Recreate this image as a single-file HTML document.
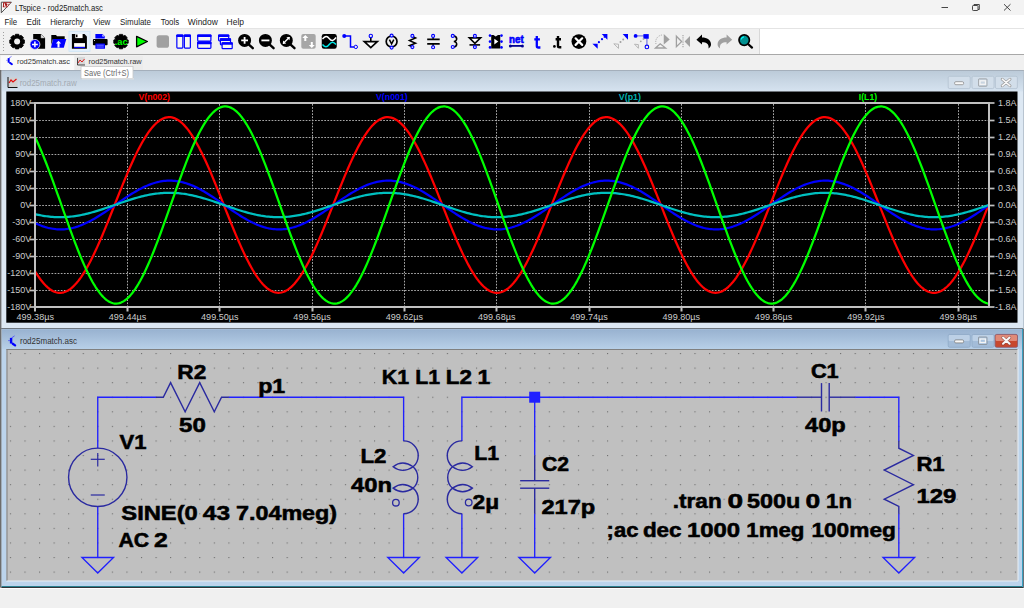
<!DOCTYPE html><html><head><meta charset="utf-8"><style>
html,body{margin:0;padding:0;background:#f0f0f0;width:1024px;height:608px;overflow:hidden}
svg{display:block}
</style></head><body>
<svg width="1024" height="608" viewBox="0 0 1024 608">
<defs>
<linearGradient id="gInact" x1="0" y1="0" x2="0" y2="1"><stop offset="0" stop-color="#bccbd9"/><stop offset="1" stop-color="#d6e3f0"/></linearGradient>
<linearGradient id="gAct" x1="0" y1="0" x2="0" y2="1"><stop offset="0" stop-color="#98b2d0"/><stop offset="1" stop-color="#b8d0e8"/></linearGradient>
<pattern id="grid" x="3.08" y="346.21" width="14.565" height="14.57" patternUnits="userSpaceOnUse"><rect x="6.9" y="6.9" width="1" height="1" fill="#585858"/></pattern>
</defs>

<rect x="0" y="0" width="1024" height="15" fill="#f3f3f3"/>
<rect x="0" y="15" width="1024" height="13.5" fill="#ffffff"/>
<rect x="0" y="28.5" width="1024" height="25.5" fill="#f0f0f0"/>
<rect x="760" y="28.5" width="264" height="25.5" fill="#ffffff"/>
<rect x="759" y="28.5" width="1" height="25.5" fill="#d8d8d8"/>
<rect x="0" y="28" width="1024" height="1" fill="#e4e4e4"/>
<rect x="0" y="54" width="1024" height="1" fill="#a8a8a8"/>
<rect x="0" y="55" width="1024" height="15" fill="#f0f0f0"/>
<rect x="0" y="587" width="1024" height="21" fill="#f0f0f0"/>
<rect x="0" y="587" width="1024" height="1" fill="#ffffff"/>
<path d="M1.3,2.2 L11.4,2.2 L1.3,12.8 Z" fill="#fafafa" stroke="#505050" stroke-width="1" stroke-linejoin="miter"/><path d="M3.2,2.3 L11,2.3 L9,4.5 L7.6,7.3 L2.8,7.3 Z" fill="#a81818"/><path d="M4.6,3.4 L4.4,6.2 L6.4,6.2 M6.6,3.4 L9.8,3.4 M8.2,3.4 L7.4,6.2" stroke="#fff" stroke-width="0.9" fill="none"/>
<text x="15" y="10.8" font-family="Liberation Sans" font-size="8.2" fill="#222" font-weight="normal" text-anchor="start" textLength="88" lengthAdjust="spacingAndGlyphs" >LTspice - rod25match.asc</text>
<rect x="941.5" y="7" width="6.5" height="0.9" fill="#333"/>
<rect x="972.5" y="5.5" width="5.5" height="5" fill="none" stroke="#333" stroke-width="0.9" rx="0.8"/><path d="M974,5.5 L974,4.5 L979.3,4.5 L979.3,9.5 L978,9.5" fill="none" stroke="#333" stroke-width="0.9"/>
<path d="M1004,4.2 L1010.5,10.5 M1010.5,4.2 L1004,10.5" stroke="#333" stroke-width="0.9"/>
<text x="4.6" y="25.1" font-family="Liberation Sans" font-size="8.4" fill="#222" font-weight="normal" text-anchor="start" textLength="12.6" lengthAdjust="spacingAndGlyphs" >File</text>
<text x="26.6" y="25.1" font-family="Liberation Sans" font-size="8.4" fill="#222" font-weight="normal" text-anchor="start" textLength="14" lengthAdjust="spacingAndGlyphs" >Edit</text>
<text x="50.2" y="25.1" font-family="Liberation Sans" font-size="8.4" fill="#222" font-weight="normal" text-anchor="start" textLength="33.6" lengthAdjust="spacingAndGlyphs" >Hierarchy</text>
<text x="93.2" y="25.1" font-family="Liberation Sans" font-size="8.4" fill="#222" font-weight="normal" text-anchor="start" textLength="17.2" lengthAdjust="spacingAndGlyphs" >View</text>
<text x="120" y="25.1" font-family="Liberation Sans" font-size="8.4" fill="#222" font-weight="normal" text-anchor="start" textLength="31" lengthAdjust="spacingAndGlyphs" >Simulate</text>
<text x="160.8" y="25.1" font-family="Liberation Sans" font-size="8.4" fill="#222" font-weight="normal" text-anchor="start" textLength="18.4" lengthAdjust="spacingAndGlyphs" >Tools</text>
<text x="187.8" y="25.1" font-family="Liberation Sans" font-size="8.4" fill="#222" font-weight="normal" text-anchor="start" textLength="30" lengthAdjust="spacingAndGlyphs" >Window</text>
<text x="226.6" y="25.1" font-family="Liberation Sans" font-size="8.4" fill="#222" font-weight="normal" text-anchor="start" textLength="17.4" lengthAdjust="spacingAndGlyphs" >Help</text>
<rect x="3" y="32" width="1" height="1" fill="#a0a0a0"/>
<rect x="3" y="35" width="1" height="1" fill="#a0a0a0"/>
<rect x="3" y="38" width="1" height="1" fill="#a0a0a0"/>
<rect x="3" y="41" width="1" height="1" fill="#a0a0a0"/>
<rect x="3" y="44" width="1" height="1" fill="#a0a0a0"/>
<rect x="3" y="47" width="1" height="1" fill="#a0a0a0"/>
<rect x="3" y="50" width="1" height="1" fill="#a0a0a0"/>
<rect x="69" y="31.3" width="21" height="20" fill="#e5f0fb" stroke="#cce4f7" stroke-width="0.8"/>
<path d="M24.42,39.96 L24.42,43.24 L22.49,43.88 L22.52,43.80 L23.43,45.62 L21.12,47.93 L19.30,47.02 L19.38,46.99 L18.74,48.92 L15.46,48.92 L14.82,46.99 L14.90,47.02 L13.08,47.93 L10.77,45.62 L11.68,43.80 L11.71,43.88 L9.78,43.24 L9.78,39.96 L11.71,39.32 L11.68,39.40 L10.77,37.58 L13.08,35.27 L14.90,36.18 L14.82,36.21 L15.46,34.28 L18.74,34.28 L19.38,36.21 L19.30,36.18 L21.12,35.27 L23.43,37.58 L22.52,39.40 L22.49,39.32 Z" fill="#000" stroke="#000" stroke-width="0.8" stroke-linejoin="round"/>
<circle cx="17.1" cy="41.6" r="3" fill="#f0f0f0"/>
<path d="M33.2,34 L41,34 L45.1,38 L45.1,48.75 L33.2,48.75 Z" fill="#000"/><path d="M41,34.3 L41,38 L44.8,38" fill="#e8e8e8" stroke="#999" stroke-width="0.5"/>
<circle cx="34.9" cy="44.4" r="5" fill="#0000ff" stroke="#f0f0f0" stroke-width="0.8"/><path d="M32,44.4 L37.8,44.4 M34.9,41.5 L34.9,47.3" stroke="#fff" stroke-width="1.5"/>
<path d="M51.3,36 L51.3,35 L56,35 L57,36.3 L64.7,36.3 L64.7,39 L52.9,39 L51.3,45 Z" fill="#000"/>
<path d="M53,39 L66.3,39 L63.8,47.8 L51,47.8 Z" fill="#0000ff"/><path d="M58.5,40.8 L61.2,43.6 L59.5,43.6 L59.5,47.5 L57.5,47.5 L57.5,43.6 L55.8,43.6 Z" fill="#fff"/>
<path d="M71.9,34 L84.5,34 L86.9,36.4 L86.9,48.75 L71.9,48.75 Z" fill="#000"/>
<rect x="75.3" y="34" width="7.3" height="4.1" fill="#fff"/><rect x="76" y="34.6" width="1.5" height="2.6" fill="#000"/>
<rect x="74.1" y="43.1" width="10.9" height="3.8" fill="#fff"/><rect x="74.1" y="46.9" width="10.9" height="1.2" fill="#0000ff"/>
<path d="M95.4,34 L102.5,34 L104.75,36.2 L104.75,38.6 L95.4,38.6 Z" fill="#0000ff"/><path d="M102.3,34.3 L102.3,36.4 L104.5,36.4 Z" fill="#e8e8ff"/>
<rect x="92.9" y="39" width="14.7" height="6.3" rx="1" fill="#000"/><rect x="94" y="40" width="0.9" height="0.9" fill="#fff"/>
<rect x="95.4" y="43.4" width="9.6" height="5.35" rx="0.6" fill="#0000ff"/><path d="M96.6,45.2 L103.8,45.2 M96.6,47 L103.8,47" stroke="#9090ff" stroke-width="0.8"/>
<path d="M128.22,39.99 L128.22,43.21 L126.32,43.85 L126.35,43.77 L127.25,45.56 L124.96,47.85 L123.17,46.95 L123.25,46.92 L122.61,48.82 L119.39,48.82 L118.75,46.92 L118.83,46.95 L117.04,47.85 L114.75,45.56 L115.65,43.77 L115.68,43.85 L113.78,43.21 L113.78,39.99 L115.68,39.35 L115.65,39.43 L114.75,37.64 L117.04,35.35 L118.83,36.25 L118.75,36.28 L119.39,34.38 L122.61,34.38 L123.25,36.28 L123.17,36.25 L124.96,35.35 L127.25,37.64 L126.35,39.43 L126.32,39.35 Z" fill="#000" stroke="#000" stroke-width="0.8" stroke-linejoin="round"/>
<text x="121.2" y="44.8" font-family="Liberation Sans" font-weight="bold" font-size="9.5" fill="#00ff00" text-anchor="middle" textLength="13" lengthAdjust="spacingAndGlyphs">.ac</text>
<path d="M136.6,36.3 L147.4,41.5 L136.6,46.8 Z" fill="#00ff00" stroke="#000" stroke-width="1.3" stroke-linejoin="round"/>
<rect x="156.6" y="35.3" width="12.4" height="12.5" rx="2.6" fill="#a0a0a0"/>
<rect x="176.85" y="35" width="6" height="13.1" rx="0.8" fill="#f8f8f0" stroke="#0000ff" stroke-width="1.2"/><rect x="176.25" y="34.4" width="7.2" height="2.6" rx="0.8" fill="#0000ff"/>
<rect x="184.35" y="35" width="6" height="13.1" rx="0.8" fill="#f8f8f0" stroke="#0000ff" stroke-width="1.2"/><rect x="183.75" y="34.4" width="7.2" height="2.6" rx="0.8" fill="#0000ff"/>
<rect x="197.7" y="35.0" width="13.2" height="6.1" rx="0.8" fill="#f8f8f0" stroke="#0000ff" stroke-width="1.2"/><rect x="197.1" y="34.4" width="14.4" height="2.7" rx="0.8" fill="#0000ff"/>
<rect x="197.7" y="42.2" width="13.2" height="6.1" rx="0.8" fill="#f8f8f0" stroke="#0000ff" stroke-width="1.2"/><rect x="197.1" y="41.6" width="14.4" height="2.7" rx="0.8" fill="#0000ff"/>
<rect x="218.6" y="35.0" width="10.1" height="5.9" rx="0.8" fill="#f8f8f0" stroke="#0000ff" stroke-width="1.2"/><rect x="218" y="34.4" width="11.3" height="2.6" rx="0.8" fill="#0000ff"/>
<rect x="220.4" y="38.9" width="10.1" height="5.9" rx="0.8" fill="#f8f8f0" stroke="#0000ff" stroke-width="1.2"/><rect x="219.8" y="38.3" width="11.3" height="2.6" rx="0.8" fill="#0000ff"/>
<rect x="222.1" y="42.800000000000004" width="10.1" height="5.9" rx="0.8" fill="#f8f8f0" stroke="#0000ff" stroke-width="1.2"/><rect x="221.5" y="42.2" width="11.3" height="2.6" rx="0.8" fill="#0000ff"/>
<path d="M248.10,43.90 L252.80,48.20" stroke="#000" stroke-width="2.4" stroke-linecap="round"/><circle cx="244.6" cy="40.4" r="5.7" fill="#000" stroke="#000" stroke-width="1.6"/>
<path d="M241.2,40.4 L248,40.4 M244.6,37 L244.6,43.8" stroke="#fff" stroke-width="1.8"/>
<path d="M268.90,43.90 L273.60,48.20" stroke="#000" stroke-width="2.4" stroke-linecap="round"/><circle cx="265.4" cy="40.4" r="5.7" fill="#000" stroke="#000" stroke-width="1.6"/>
<path d="M261.4,40.4 L269.4,40.4" stroke="#fff" stroke-width="1.8"/>
<path d="M289.80,43.90 L294.50,48.20" stroke="#000" stroke-width="2.4" stroke-linecap="round"/><circle cx="286.3" cy="40.4" r="5.7" fill="#000" stroke="#000" stroke-width="1.6"/>
<path d="M283.2,43.5 L289.4,37.3" stroke="#fff" stroke-width="1.3"/><path d="M289.8,36.9 L286.4,37.2 L289.5,40.3 Z M282.8,43.9 L283.1,40.5 L286.2,43.6 Z" fill="#fff"/>
<rect x="301.3" y="34" width="14.4" height="14.75" rx="2" fill="#a6a6a6"/>
<path d="M305.3,35 L308.3,38 L306.3,38 L306.3,41 L304.3,41 L304.3,38 L302.3,38 Z" fill="#fff"/><path d="M311.8,48 L314.8,45 L312.8,45 L312.8,42 L310.8,42 L310.8,45 L308.8,45 Z" fill="#fff"/>
<rect x="321.75" y="34" width="15" height="14.75" rx="2.2" fill="#000"/>
<path d="M322.5,39 C325,36 327,35.5 329.2,38.5 C331.5,41.5 333.5,41 336,37.5" stroke="#fff" stroke-width="1.4" fill="none"/>
<path d="M322.5,44.5 C325,47.5 327,47.5 329.2,44.5 C331.5,41.5 333.5,41.5 336,44.5" stroke="#00e8e8" stroke-width="1.4" fill="none"/>
<path d="M344.25,35.9 L350.5,35.9 L350.5,46.9 L354,46.9" stroke="#0000ff" stroke-width="1.5" fill="none"/><circle cx="344.25" cy="35.9" r="2" fill="#0000ff"/><circle cx="355.8" cy="46.9" r="1.7" fill="#f0f0f0" stroke="#0000ff" stroke-width="1"/>
<path d="M370.8,37.5 L370.8,41.6" stroke="#000" stroke-width="1.6"/><path d="M364.3,41.6 L377.3,41.6 L370.8,47.6 Z" fill="#fff" stroke="#000" stroke-width="1.7" stroke-linejoin="miter"/><circle cx="370.8" cy="35.9" r="1.7" fill="#f0f0f0" stroke="#0000ff" stroke-width="1.1"/>
<circle cx="391.6" cy="41.5" r="5.4" fill="none" stroke="#000" stroke-width="1.7"/><path d="M389.4,39.6 L391.6,43.8 L393.8,39.6" stroke="#000" stroke-width="1.5" fill="none"/>
<circle cx="391.6" cy="35.6" r="1.5" fill="#ddddff" stroke="#0000ff" stroke-width="1.1"/>
<circle cx="391.6" cy="47.6" r="1.5" fill="#ddddff" stroke="#0000ff" stroke-width="1.1"/>
<path d="M412.4,36.5 L415.6,38 L409.5,40.6 L415.6,43.2 L409.5,45.6 L412.4,46.8" stroke="#000" stroke-width="1.5" fill="none"/>
<circle cx="412.4" cy="35.9" r="1.5" fill="#ddddff" stroke="#0000ff" stroke-width="1.1"/>
<circle cx="412.4" cy="47.1" r="1.5" fill="#ddddff" stroke="#0000ff" stroke-width="1.1"/>
<path d="M433.1,36 L433.1,39.3 M433.1,43.9 L433.1,47" stroke="#000" stroke-width="1.4"/><path d="M427.2,39.3 L439.7,39.3 M427.2,43.9 L439.7,43.9" stroke="#000" stroke-width="1.7"/>
<circle cx="433.1" cy="35.9" r="1.5" fill="#ddddff" stroke="#0000ff" stroke-width="1.1"/>
<circle cx="433.1" cy="47.3" r="1.5" fill="#ddddff" stroke="#0000ff" stroke-width="1.1"/>
<path d="M452.8,35.9 C457.8,36 457.8,41.3 453.8,41.5 C457.8,41.7 457.8,47 452.8,47" stroke="#000" stroke-width="1.6" fill="none"/>
<circle cx="452.75" cy="35.9" r="1.5" fill="#ddddff" stroke="#0000ff" stroke-width="1.1"/>
<circle cx="452.75" cy="47" r="1.5" fill="#ddddff" stroke="#0000ff" stroke-width="1.1"/>
<path d="M469.3,37.9 L480.6,37.9 L474.9,43.4 Z" fill="#fff" stroke="#000" stroke-width="1.6" stroke-linejoin="miter"/><path d="M469.5,44.9 L480.1,44.9" stroke="#000" stroke-width="1.6"/>
<circle cx="474.9" cy="35.9" r="1.5" fill="#ddddff" stroke="#0000ff" stroke-width="1.1"/>
<circle cx="474.9" cy="47.1" r="1.5" fill="#ddddff" stroke="#0000ff" stroke-width="1.1"/>
<path d="M491.2,35 L493.5,35 L495.7,36.5 L498,35 L500.25,35 L500.25,48.4 L491.2,48.4 Z" fill="#000"/><path d="M494.3,38.8 L498.3,41.6 L494.3,44.4 Z" fill="#fff"/>
<circle cx="490" cy="35.6" r="1.3" fill="#0000ff"/><circle cx="501.5" cy="35.6" r="1.3" fill="#0000ff"/>
<circle cx="490" cy="41.6" r="1.3" fill="#0000ff"/><circle cx="501.5" cy="41.6" r="1.3" fill="#0000ff"/>
<circle cx="490" cy="47.4" r="1.3" fill="#0000ff"/><circle cx="501.5" cy="47.4" r="1.3" fill="#0000ff"/>
<text x="516.4" y="42.6" font-family="Liberation Sans" font-weight="bold" font-size="10" fill="#0000ff" stroke="#0000ff" stroke-width="0.6" text-anchor="middle" textLength="14.6" lengthAdjust="spacingAndGlyphs">net</text>
<path d="M510.4,45.9 L522.4,45.9" stroke="#000090" stroke-width="1.8"/><circle cx="510.4" cy="45.9" r="1.5" fill="#000090"/><circle cx="522.4" cy="45.9" r="1.5" fill="#000090"/>
<path d="M536.8,36 L536.8,46 Q536.8,47.5 538.3,47.5 L540.4,47.5 M534.3,39.3 L539.9,39.3" stroke="#0000ff" stroke-width="2.3" fill="none"/>
<circle cx="554.4" cy="46.4" r="1.35" fill="#000"/><path d="M558,36 L558,46 Q558,47.3 559.5,47.3 L561.3,47.3 M555.6,39.3 L561,39.3" stroke="#000" stroke-width="2.4" fill="none"/>
<circle cx="578.9" cy="41.6" r="7.4" fill="#000"/><path d="M575.6,38.3 L582.2,44.9 M582.2,38.3 L575.6,44.9" stroke="#fff" stroke-width="2.2" stroke-linecap="round"/>
<path d="M601.75,34.1 L607.4,34.1 L607.4,39.7 Z M592.4,43.7 L597.7,43.7 L597.7,48.75 Z" fill="#0000ff"/><circle cx="598.9" cy="42.2" r="1.1" fill="#0000ff"/><circle cx="602" cy="39.2" r="1.1" fill="#0000ff"/><circle cx="604.5" cy="36.9" r="0.9" fill="#0000ff"/>
<path d="M622.7,34.1 L628,34.1 L628,39.7 Z" fill="#0000ff"/><circle cx="620.5" cy="42" r="1" fill="#a0a0a0"/><circle cx="623.2" cy="39.4" r="1" fill="#a0a0a0"/><path d="M613.8,43.8 L618.5,44.2 L618.5,48.4 Z" fill="none" stroke="#a8a8a8" stroke-width="0.8"/>
<path d="M635.6,35.9 L644,35.9 M646.9,38.5 L646.9,45.3" stroke="#8080e0" stroke-width="1.3"/><rect x="643.4" y="34.1" width="5.35" height="4.65" fill="#0000ff"/><circle cx="635.6" cy="35.9" r="1.9" fill="#0000ff"/><circle cx="646.9" cy="46.9" r="1.8" fill="#f0f0f0" stroke="#0000ff" stroke-width="1.1"/>
<circle cx="640.8" cy="41.3" r="0.9" fill="#a0a0a0"/><circle cx="643.5" cy="38.9" r="0.9" fill="#a0a0a0"/><path d="M634.5,44.2 L638.4,44.6 L638.4,48.3 Z" fill="none" stroke="#a8a8a8" stroke-width="0.8"/>
<path d="M663.75,34.1 L669.7,39.4 L663.75,44.4 Z" fill="#a0a0a0"/><path d="M655.5,48 L660.2,43.8 L665.6,48 Z" fill="none" stroke="#a0a0a0" stroke-width="1.3"/>
<path d="M656,44 A7,7 0 0 1 663,35" stroke="#a0a0a0" stroke-width="1" stroke-dasharray="1 1.2" fill="none"/>
<path d="M676.4,36.2 L681.6,41.6 L676.4,46.7 Z" fill="none" stroke="#a0a0a0" stroke-width="1.3"/><path d="M690,35.9 L684.6,41.6 L690,47 Z" fill="#a0a0a0"/><path d="M683,35 L683,48" stroke="#a0a0a0" stroke-width="1.1" stroke-dasharray="1.2 1"/>
<path d="M696.4,39.7 L702,34.6 L702,37.4 C707,37.4 711,40 711,44.3 C711,46 710.3,47.4 708.5,48.5 C709.3,44 706.5,42.2 702,42.2 L702,44.6 Z" fill="#000"/>
<path d="M732.2,39.7 L726.6,34.6 L726.6,37.4 C721.6,37.4 717.6,40 717.6,44.3 C717.6,46 718.3,47.4 720.1,48.5 C719.3,44 722.1,42.2 726.6,42.2 L726.6,44.6 Z" fill="#a0a0a0"/>
<path d="M747.5,43.5 L752,47.6" stroke="#000" stroke-width="2.3" stroke-linecap="round"/><circle cx="744.2" cy="40.1" r="5.2" fill="#009090" stroke="#000" stroke-width="1.7"/><path d="M741.2,39.3 A3.2,3.2 0 0 1 744,36.8" stroke="#00ffff" stroke-width="1.3" fill="none"/>
<rect x="1" y="55.5" width="73" height="14.5" fill="#fafafa"/>
<rect x="75" y="56" width="68" height="14" fill="#ececec"/>
<path d="M11.53,56.40 L8.91,58.29" stroke="#4040ff" stroke-width="0.82" opacity="0.8"/><rect x="7.68" y="58.12" width="1.97" height="4.59" fill="#0000ff"/><path d="M6.20,60.34 L7.76,60.34" stroke="#4040ff" stroke-width="0.82" opacity="0.7"/><path d="M9.97,62.88 L11.94,64.27" stroke="#0000ff" stroke-width="1.89" stroke-linecap="round"/>
<text x="17" y="64" font-family="Liberation Sans" font-size="7.6" fill="#333" font-weight="normal" text-anchor="start" textLength="53" lengthAdjust="spacingAndGlyphs" >rod25match.asc</text>
<rect x="77" y="57" width="8" height="8" fill="#d8d8d8"/><path d="M78,63 L80,60 L82,62 L84.5,59" stroke="#e02020" stroke-width="1" fill="none"/><path d="M77.5,58 L77.5,65 L85,65" stroke="#222" stroke-width="0.8" fill="none"/>
<text x="88.6" y="64.3" font-family="Liberation Sans" font-size="7.6" fill="#333" font-weight="normal" text-anchor="start" textLength="53" lengthAdjust="spacingAndGlyphs" >rod25match.raw</text>
<rect x="0" y="70" width="1024" height="518" fill="#a0a0a0"/>
<rect x="0" y="70" width="1.5" height="517" fill="#6d6d6d"/>
<rect x="1.5" y="70.5" width="1021.5" height="257.5" fill="#dde8f3"/>
<rect x="1.5" y="70.5" width="1021.5" height="1" fill="#8a9aab"/>
<rect x="2" y="71" width="1021" height="20.5" fill="url(#gInact)"/>
<rect x="1023" y="70.5" width="1" height="258" fill="#b8c4d0"/>
<rect x="8" y="77.5" width="9.5" height="9.5" fill="#d0d0d0"/><path d="M9,83 L11,80 L13,82 L16.5,79" stroke="#e01010" stroke-width="1.2" fill="none"/><path d="M8,77 L8,87.5 L17.5,87.5" stroke="#111" stroke-width="1" fill="none"/>
<text x="19.7" y="85.5" font-family="Liberation Sans" font-size="8.4" fill="#a3abb3" font-weight="normal" text-anchor="start" textLength="57" lengthAdjust="spacingAndGlyphs" >rod25match.raw</text>
<rect x="948.2" y="76.3" width="22" height="12.3" rx="1.5" fill="#d2deea" stroke="#b3c2d1" stroke-width="0.8"/>
<rect x="972" y="76.3" width="22" height="12.3" rx="1.5" fill="#d2deea" stroke="#b3c2d1" stroke-width="0.8"/>
<rect x="995.4" y="76.3" width="22" height="12.3" rx="1.5" fill="#d2deea" stroke="#b3c2d1" stroke-width="0.8"/>
<rect x="954.6" y="81.7" width="9" height="3" rx="1.2" fill="#f8f8f8" stroke="#7f7f7f" stroke-width="0.7"/>
<rect x="978.5" y="78.8" width="8.5" height="7.5" rx="0.8" fill="#c8d4e0" stroke="#8b8b8b" stroke-width="0.6"/><rect x="980" y="80.8" width="5.5" height="3.5" fill="none" stroke="#f4f4f4" stroke-width="1.3"/>
<path d="M1002.2,79.2 L1010,85.8 M1010,79.2 L1002.2,85.8" stroke="#8b8b8b" stroke-width="2.8" stroke-linecap="round"/><path d="M1002.2,79.2 L1010,85.8 M1010,79.2 L1002.2,85.8" stroke="#f8f8f8" stroke-width="1.6" stroke-linecap="round"/>
<rect x="6.3" y="91.5" width="1011.2" height="231.2" fill="#000"/>
<g stroke="#a8a8a8" stroke-width="1" stroke-dasharray="1.7 1.4">
<line x1="36" y1="120.5" x2="988" y2="120.5"/>
<line x1="36" y1="137.5" x2="988" y2="137.5"/>
<line x1="36" y1="154.5" x2="988" y2="154.5"/>
<line x1="36" y1="171.5" x2="988" y2="171.5"/>
<line x1="36" y1="188.5" x2="988" y2="188.5"/>
<line x1="36" y1="205.5" x2="988" y2="205.5"/>
<line x1="36" y1="222.5" x2="988" y2="222.5"/>
<line x1="36" y1="239.5" x2="988" y2="239.5"/>
<line x1="36" y1="256.5" x2="988" y2="256.5"/>
<line x1="36" y1="273.5" x2="988" y2="273.5"/>
<line x1="36" y1="290.5" x2="988" y2="290.5"/>
<line x1="127.5" y1="104" x2="127.5" y2="306"/>
<line x1="219.5" y1="104" x2="219.5" y2="306"/>
<line x1="312.5" y1="104" x2="312.5" y2="306"/>
<line x1="404.5" y1="104" x2="404.5" y2="306"/>
<line x1="496.5" y1="104" x2="496.5" y2="306"/>
<line x1="589.5" y1="104" x2="589.5" y2="306"/>
<line x1="681.5" y1="104" x2="681.5" y2="306"/>
<line x1="773.5" y1="104" x2="773.5" y2="306"/>
<line x1="865.5" y1="104" x2="865.5" y2="306"/>
<line x1="958.5" y1="104" x2="958.5" y2="306"/>
</g>
<defs><clipPath id="pc"><rect x="35.2" y="93.0" width="953.5999999999999" height="224.0"/></clipPath></defs>
<g clip-path="url(#pc)" fill="none" stroke-width="2.25" stroke-linejoin="round">
<path d="M35.20,271.51 L36.79,274.06 L38.38,276.47 L39.97,278.73 L41.56,280.83 L43.15,282.78 L44.74,284.56 L46.33,286.18 L47.91,287.63 L49.50,288.90 L51.09,290.00 L52.68,290.92 L54.27,291.67 L55.86,292.23 L57.45,292.61 L59.04,292.80 L60.63,292.82 L62.22,292.65 L63.81,292.29 L65.40,291.76 L66.99,291.04 L68.58,290.15 L70.17,289.07 L71.75,287.82 L73.34,286.40 L74.93,284.81 L76.52,283.05 L78.11,281.12 L79.70,279.04 L81.29,276.81 L82.88,274.42 L84.47,271.89 L86.06,269.22 L87.65,266.42 L89.24,263.48 L90.83,260.43 L92.42,257.26 L94.01,253.98 L95.59,250.59 L97.18,247.12 L98.77,243.55 L100.36,239.91 L101.95,236.19 L103.54,232.40 L105.13,228.56 L106.72,224.67 L108.31,220.74 L109.90,216.78 L111.49,212.79 L113.08,208.78 L114.67,204.77 L116.26,200.76 L117.85,196.75 L119.43,192.77 L121.02,188.80 L122.61,184.88 L124.20,180.99 L125.79,177.16 L127.38,173.38 L128.97,169.67 L130.56,166.03 L132.15,162.48 L133.74,159.01 L135.33,155.64 L136.92,152.37 L138.51,149.21 L140.10,146.17 L141.69,143.25 L143.27,140.47 L144.86,137.81 L146.45,135.30 L148.04,132.93 L149.63,130.71 L151.22,128.65 L152.81,126.74 L154.40,125.00 L155.99,123.43 L157.58,122.03 L159.17,120.80 L160.76,119.74 L162.35,118.87 L163.94,118.17 L165.53,117.66 L167.11,117.32 L168.70,117.18 L170.29,117.21 L171.88,117.43 L173.47,117.83 L175.06,118.41 L176.65,119.17 L178.24,120.12 L179.83,121.24 L181.42,122.53 L183.01,124.00 L184.60,125.64 L186.19,127.44 L187.78,129.40 L189.37,131.52 L190.95,133.80 L192.54,136.22 L194.13,138.79 L195.72,141.50 L197.31,144.34 L198.90,147.30 L200.49,150.39 L202.08,153.59 L203.67,156.89 L205.26,160.30 L206.85,163.80 L208.44,167.39 L210.03,171.06 L211.62,174.79 L213.21,178.59 L214.79,182.45 L216.38,186.35 L217.97,190.29 L219.56,194.26 L221.15,198.26 L222.74,202.26 L224.33,206.28 L225.92,210.29 L227.51,214.29 L229.10,218.27 L230.69,222.22 L232.28,226.14 L233.87,230.01 L235.46,233.83 L237.05,237.59 L238.63,241.28 L240.22,244.90 L241.81,248.43 L243.40,251.88 L244.99,255.22 L246.58,258.46 L248.17,261.59 L249.76,264.60 L251.35,267.48 L252.94,270.24 L254.53,272.86 L256.12,275.34 L257.71,277.67 L259.30,279.84 L260.89,281.87 L262.47,283.73 L264.06,285.42 L265.65,286.95 L267.24,288.31 L268.83,289.50 L270.42,290.50 L272.01,291.33 L273.60,291.98 L275.19,292.45 L276.78,292.73 L278.37,292.83 L279.96,292.75 L281.55,292.49 L283.14,292.04 L284.73,291.41 L286.31,290.60 L287.90,289.61 L289.49,288.44 L291.08,287.10 L292.67,285.59 L294.26,283.91 L295.85,282.07 L297.44,280.06 L299.03,277.90 L300.62,275.58 L302.21,273.12 L303.80,270.52 L305.39,267.78 L306.98,264.90 L308.57,261.91 L310.15,258.79 L311.74,255.56 L313.33,252.23 L314.92,248.79 L316.51,245.27 L318.10,241.66 L319.69,237.98 L321.28,234.22 L322.87,230.41 L324.46,226.54 L326.05,222.63 L327.64,218.68 L329.23,214.70 L330.82,210.70 L332.41,206.69 L333.99,202.68 L335.58,198.67 L337.17,194.67 L338.76,190.70 L340.35,186.75 L341.94,182.85 L343.53,178.99 L345.12,175.18 L346.71,171.44 L348.30,167.77 L349.89,164.17 L351.48,160.66 L353.07,157.24 L354.66,153.92 L356.25,150.71 L357.83,147.61 L359.42,144.64 L361.01,141.78 L362.60,139.06 L364.19,136.48 L365.78,134.04 L367.37,131.75 L368.96,129.61 L370.55,127.63 L372.14,125.81 L373.73,124.16 L375.32,122.68 L376.91,121.36 L378.50,120.23 L380.09,119.26 L381.67,118.48 L383.26,117.88 L384.85,117.46 L386.44,117.22 L388.03,117.17 L389.62,117.30 L391.21,117.61 L392.80,118.11 L394.39,118.79 L395.98,119.64 L397.57,120.68 L399.16,121.89 L400.75,123.28 L402.34,124.83 L403.93,126.55 L405.51,128.44 L407.10,130.49 L408.69,132.69 L410.28,135.04 L411.87,137.54 L413.46,140.18 L415.05,142.96 L416.64,145.87 L418.23,148.89 L419.82,152.04 L421.41,155.30 L423.00,158.66 L424.59,162.12 L426.18,165.66 L427.77,169.29 L429.35,172.99 L430.94,176.77 L432.53,180.59 L434.12,184.47 L435.71,188.40 L437.30,192.36 L438.89,196.34 L440.48,200.34 L442.07,204.35 L443.66,208.37 L445.25,212.37 L446.84,216.37 L448.43,220.33 L450.02,224.27 L451.61,228.16 L453.19,232.01 L454.78,235.80 L456.37,239.53 L457.96,243.18 L459.55,246.75 L461.14,250.24 L462.73,253.63 L464.32,256.92 L465.91,260.11 L467.50,263.17 L469.09,266.12 L470.68,268.94 L472.27,271.62 L473.86,274.17 L475.45,276.57 L477.03,278.82 L478.62,280.92 L480.21,282.86 L481.80,284.63 L483.39,286.24 L484.98,287.68 L486.57,288.95 L488.16,290.04 L489.75,290.96 L491.34,291.69 L492.93,292.25 L494.52,292.62 L496.11,292.81 L497.70,292.81 L499.29,292.64 L500.87,292.27 L502.46,291.73 L504.05,291.01 L505.64,290.10 L507.23,289.02 L508.82,287.77 L510.41,286.34 L512.00,284.74 L513.59,282.97 L515.18,281.04 L516.77,278.95 L518.36,276.71 L519.95,274.32 L521.54,271.78 L523.13,269.10 L524.71,266.29 L526.30,263.36 L527.89,260.30 L529.48,257.12 L531.07,253.84 L532.66,250.45 L534.25,246.97 L535.84,243.40 L537.43,239.75 L539.02,236.03 L540.61,232.24 L542.20,228.40 L543.79,224.51 L545.38,220.57 L546.97,216.61 L548.55,212.62 L550.14,208.61 L551.73,204.60 L553.32,200.59 L554.91,196.58 L556.50,192.60 L558.09,188.64 L559.68,184.71 L561.27,180.83 L562.86,177.00 L564.45,173.22 L566.04,169.52 L567.63,165.88 L569.22,162.33 L570.81,158.87 L572.39,155.50 L573.98,152.24 L575.57,149.08 L577.16,146.05 L578.75,143.13 L580.34,140.35 L581.93,137.70 L583.52,135.19 L585.11,132.83 L586.70,130.62 L588.29,128.56 L589.88,126.67 L591.47,124.93 L593.06,123.37 L594.65,121.97 L596.23,120.75 L597.82,119.70 L599.41,118.83 L601.00,118.15 L602.59,117.64 L604.18,117.31 L605.77,117.17 L607.36,117.22 L608.95,117.44 L610.54,117.85 L612.13,118.44 L613.72,119.21 L615.31,120.16 L616.90,121.29 L618.49,122.59 L620.07,124.07 L621.66,125.71 L623.25,127.52 L624.84,129.49 L626.43,131.62 L628.02,133.90 L629.61,136.33 L631.20,138.90 L632.79,141.61 L634.38,144.46 L635.97,147.43 L637.56,150.52 L639.15,153.72 L640.74,157.04 L642.33,160.45 L643.91,163.95 L645.50,167.54 L647.09,171.21 L648.68,174.95 L650.27,178.75 L651.86,182.61 L653.45,186.51 L655.04,190.46 L656.63,194.43 L658.22,198.42 L659.81,202.43 L661.40,206.45 L662.99,210.46 L664.58,214.46 L666.17,218.44 L667.75,222.39 L669.34,226.30 L670.93,230.17 L672.52,233.99 L674.11,237.75 L675.70,241.44 L677.29,245.05 L678.88,248.58 L680.47,252.02 L682.06,255.36 L683.65,258.59 L685.24,261.72 L686.83,264.72 L688.42,267.60 L690.01,270.35 L691.59,272.97 L693.18,275.44 L694.77,277.76 L696.36,279.93 L697.95,281.95 L699.54,283.80 L701.13,285.49 L702.72,287.01 L704.31,288.36 L705.90,289.54 L707.49,290.54 L709.08,291.36 L710.67,292.00 L712.26,292.46 L713.85,292.74 L715.43,292.83 L717.02,292.74 L718.61,292.47 L720.20,292.01 L721.79,291.38 L723.38,290.56 L724.97,289.56 L726.56,288.39 L728.15,287.04 L729.74,285.52 L731.33,283.84 L732.92,281.98 L734.51,279.97 L736.10,277.80 L737.69,275.48 L739.27,273.01 L740.86,270.40 L742.45,267.66 L744.04,264.78 L745.63,261.78 L747.22,258.66 L748.81,255.42 L750.40,252.08 L751.99,248.65 L753.58,245.12 L755.17,241.51 L756.76,237.82 L758.35,234.06 L759.94,230.25 L761.53,226.38 L763.11,222.46 L764.70,218.51 L766.29,214.53 L767.88,210.53 L769.47,206.52 L771.06,202.51 L772.65,198.50 L774.24,194.51 L775.83,190.53 L777.42,186.59 L779.01,182.68 L780.60,178.83 L782.19,175.02 L783.78,171.28 L785.37,167.61 L786.95,164.02 L788.54,160.51 L790.13,157.10 L791.72,153.79 L793.31,150.58 L794.90,147.49 L796.49,144.51 L798.08,141.67 L799.67,138.95 L801.26,136.38 L802.85,133.94 L804.44,131.66 L806.03,129.53 L807.62,127.55 L809.21,125.74 L810.79,124.10 L812.38,122.62 L813.97,121.31 L815.56,120.18 L817.15,119.23 L818.74,118.45 L820.33,117.86 L821.92,117.45 L823.51,117.22 L825.10,117.17 L826.69,117.31 L828.28,117.63 L829.87,118.13 L831.46,118.82 L833.05,119.68 L834.63,120.73 L836.22,121.95 L837.81,123.34 L839.40,124.90 L840.99,126.63 L842.58,128.52 L844.17,130.58 L845.76,132.79 L847.35,135.15 L848.94,137.65 L850.53,140.30 L852.12,143.08 L853.71,145.99 L855.30,149.02 L856.89,152.18 L858.47,155.44 L860.06,158.80 L861.65,162.26 L863.24,165.81 L864.83,169.45 L866.42,173.15 L868.01,176.92 L869.60,180.76 L871.19,184.64 L872.78,188.56 L874.37,192.52 L875.96,196.51 L877.55,200.51 L879.14,204.52 L880.73,208.54 L882.31,212.54 L883.90,216.53 L885.49,220.50 L887.08,224.43 L888.67,228.32 L890.26,232.17 L891.85,235.96 L893.44,239.68 L895.03,243.33 L896.62,246.90 L898.21,250.38 L899.80,253.77 L901.39,257.06 L902.98,260.24 L904.57,263.30 L906.15,266.24 L907.74,269.05 L909.33,271.73 L910.92,274.27 L912.51,276.67 L914.10,278.91 L915.69,281.00 L917.28,282.93 L918.87,284.70 L920.46,286.31 L922.05,287.74 L923.64,289.00 L925.23,290.08 L926.82,290.99 L928.41,291.72 L929.99,292.27 L931.58,292.63 L933.17,292.81 L934.76,292.81 L936.35,292.62 L937.94,292.26 L939.53,291.70 L941.12,290.97 L942.71,290.06 L944.30,288.97 L945.89,287.71 L947.48,286.27 L949.07,284.66 L950.66,282.89 L952.25,280.96 L953.83,278.86 L955.42,276.61 L957.01,274.21 L958.60,271.67 L960.19,268.99 L961.78,266.17 L963.37,263.23 L964.96,260.17 L966.55,256.99 L968.14,253.70 L969.73,250.31 L971.32,246.82 L972.91,243.25 L974.50,239.60 L976.09,235.87 L977.67,232.08 L979.26,228.24 L980.85,224.34 L982.44,220.41 L984.03,216.44 L985.62,212.45 L987.21,208.45 L988.80,204.43" stroke="#ff0000"/>
<path d="M35.20,223.17 L36.79,223.90 L38.38,224.58 L39.97,225.22 L41.56,225.82 L43.15,226.38 L44.74,226.89 L46.33,227.36 L47.91,227.78 L49.50,228.15 L51.09,228.47 L52.68,228.75 L54.27,228.97 L55.86,229.15 L57.45,229.27 L59.04,229.34 L60.63,229.37 L62.22,229.34 L63.81,229.26 L65.40,229.13 L66.99,228.95 L68.58,228.72 L70.17,228.44 L71.75,228.11 L73.34,227.74 L74.93,227.31 L76.52,226.84 L78.11,226.32 L79.70,225.76 L81.29,225.16 L82.88,224.51 L84.47,223.83 L86.06,223.10 L87.65,222.34 L89.24,221.54 L90.83,220.70 L92.42,219.83 L94.01,218.93 L95.59,218.01 L97.18,217.05 L98.77,216.07 L100.36,215.07 L101.95,214.04 L103.54,213.00 L105.13,211.94 L106.72,210.87 L108.31,209.78 L109.90,208.68 L111.49,207.58 L113.08,206.47 L114.67,205.36 L116.26,204.24 L117.85,203.13 L119.43,202.02 L121.02,200.92 L122.61,199.83 L124.20,198.75 L125.79,197.68 L127.38,196.62 L128.97,195.59 L130.56,194.57 L132.15,193.57 L133.74,192.60 L135.33,191.66 L136.92,190.74 L138.51,189.85 L140.10,188.99 L141.69,188.17 L143.27,187.38 L144.86,186.63 L146.45,185.92 L148.04,185.25 L149.63,184.62 L151.22,184.03 L152.81,183.48 L154.40,182.98 L155.99,182.53 L157.58,182.12 L159.17,181.76 L160.76,181.45 L162.35,181.19 L163.94,180.98 L165.53,180.82 L167.11,180.71 L168.70,180.65 L170.29,180.64 L171.88,180.68 L173.47,180.77 L175.06,180.91 L176.65,181.10 L178.24,181.35 L179.83,181.64 L181.42,181.98 L183.01,182.37 L184.60,182.81 L186.19,183.29 L187.78,183.82 L189.37,184.39 L190.95,185.00 L192.54,185.66 L194.13,186.36 L195.72,187.10 L197.31,187.87 L198.90,188.68 L200.49,189.52 L202.08,190.40 L203.67,191.30 L205.26,192.24 L206.85,193.20 L208.44,194.19 L210.03,195.20 L211.62,196.23 L213.21,197.27 L214.79,198.34 L216.38,199.42 L217.97,200.51 L219.56,201.60 L221.15,202.71 L222.74,203.82 L224.33,204.93 L225.92,206.05 L227.51,207.16 L229.10,208.26 L230.69,209.36 L232.28,210.46 L233.87,211.53 L235.46,212.60 L237.05,213.65 L238.63,214.68 L240.22,215.69 L241.81,216.68 L243.40,217.65 L244.99,218.59 L246.58,219.50 L248.17,220.38 L249.76,221.22 L251.35,222.04 L252.94,222.81 L254.53,223.56 L256.12,224.26 L257.71,224.92 L259.30,225.54 L260.89,226.12 L262.47,226.65 L264.06,227.14 L265.65,227.58 L267.24,227.98 L268.83,228.32 L270.42,228.62 L272.01,228.87 L273.60,229.07 L275.19,229.22 L276.78,229.31 L278.37,229.36 L279.96,229.36 L281.55,229.30 L283.14,229.20 L284.73,229.04 L286.31,228.84 L287.90,228.58 L289.49,228.28 L291.08,227.92 L292.67,227.52 L294.26,227.07 L295.85,226.58 L297.44,226.04 L299.03,225.45 L300.62,224.83 L302.21,224.16 L303.80,223.45 L305.39,222.71 L306.98,221.92 L308.57,221.10 L310.15,220.25 L311.74,219.37 L313.33,218.45 L314.92,217.51 L316.51,216.54 L318.10,215.55 L319.69,214.54 L321.28,213.50 L322.87,212.45 L324.46,211.38 L326.05,210.30 L327.64,209.21 L329.23,208.11 L330.82,207.00 L332.41,205.89 L333.99,204.78 L335.58,203.66 L337.17,202.55 L338.76,201.45 L340.35,200.35 L341.94,199.26 L343.53,198.19 L345.12,197.12 L346.71,196.08 L348.30,195.05 L349.89,194.05 L351.48,193.06 L353.07,192.11 L354.66,191.17 L356.25,190.27 L357.83,189.40 L359.42,188.56 L361.01,187.76 L362.60,186.99 L364.19,186.26 L365.78,185.57 L367.37,184.91 L368.96,184.31 L370.55,183.74 L372.14,183.22 L373.73,182.74 L375.32,182.31 L376.91,181.93 L378.50,181.60 L380.09,181.31 L381.67,181.07 L383.26,180.89 L384.85,180.75 L386.44,180.67 L388.03,180.63 L389.62,180.65 L391.21,180.72 L392.80,180.84 L394.39,181.01 L395.98,181.22 L397.57,181.49 L399.16,181.81 L400.75,182.18 L402.34,182.59 L403.93,183.05 L405.51,183.56 L407.10,184.11 L408.69,184.70 L410.28,185.34 L411.87,186.02 L413.46,186.74 L415.05,187.49 L416.64,188.29 L418.23,189.11 L419.82,189.97 L421.41,190.87 L423.00,191.79 L424.59,192.74 L426.18,193.71 L427.77,194.71 L429.35,195.73 L430.94,196.77 L432.53,197.83 L434.12,198.90 L435.71,199.98 L437.30,201.08 L438.89,202.18 L440.48,203.29 L442.07,204.40 L443.66,205.51 L445.25,206.63 L446.84,207.74 L448.43,208.84 L450.02,209.93 L451.61,211.02 L453.19,212.09 L454.78,213.15 L456.37,214.19 L457.96,215.21 L459.55,216.21 L461.14,217.19 L462.73,218.14 L464.32,219.06 L465.91,219.96 L467.50,220.82 L469.09,221.65 L470.68,222.45 L472.27,223.21 L473.86,223.93 L475.45,224.61 L477.03,225.25 L478.62,225.85 L480.21,226.40 L481.80,226.91 L483.39,227.37 L484.98,227.79 L486.57,228.16 L488.16,228.48 L489.75,228.76 L491.34,228.98 L492.93,229.15 L494.52,229.27 L496.11,229.35 L497.70,229.37 L499.29,229.34 L500.87,229.26 L502.46,229.12 L504.05,228.94 L505.64,228.71 L507.23,228.43 L508.82,228.10 L510.41,227.72 L512.00,227.29 L513.59,226.82 L515.18,226.30 L516.77,225.74 L518.36,225.13 L519.95,224.49 L521.54,223.80 L523.13,223.07 L524.71,222.30 L526.30,221.50 L527.89,220.66 L529.48,219.80 L531.07,218.90 L532.66,217.97 L534.25,217.01 L535.84,216.03 L537.43,215.03 L539.02,214.00 L540.61,212.96 L542.20,211.90 L543.79,210.82 L545.38,209.73 L546.97,208.64 L548.55,207.53 L550.14,206.42 L551.73,205.31 L553.32,204.20 L554.91,203.08 L556.50,201.98 L558.09,200.87 L559.68,199.78 L561.27,198.70 L562.86,197.63 L564.45,196.58 L566.04,195.54 L567.63,194.53 L569.22,193.53 L570.81,192.56 L572.39,191.62 L573.98,190.70 L575.57,189.81 L577.16,188.96 L578.75,188.14 L580.34,187.35 L581.93,186.60 L583.52,185.89 L585.11,185.22 L586.70,184.59 L588.29,184.01 L589.88,183.46 L591.47,182.96 L593.06,182.51 L594.65,182.11 L596.23,181.75 L597.82,181.44 L599.41,181.18 L601.00,180.97 L602.59,180.81 L604.18,180.70 L605.77,180.64 L607.36,180.64 L608.95,180.68 L610.54,180.77 L612.13,180.92 L613.72,181.11 L615.31,181.36 L616.90,181.65 L618.49,182.00 L620.07,182.39 L621.66,182.83 L623.25,183.31 L624.84,183.84 L626.43,184.41 L628.02,185.03 L629.61,185.69 L631.20,186.39 L632.79,187.13 L634.38,187.90 L635.97,188.71 L637.56,189.56 L639.15,190.44 L640.74,191.34 L642.33,192.28 L643.91,193.24 L645.50,194.23 L647.09,195.24 L648.68,196.27 L650.27,197.32 L651.86,198.38 L653.45,199.46 L655.04,200.55 L656.63,201.65 L658.22,202.76 L659.81,203.87 L661.40,204.98 L662.99,206.09 L664.58,207.20 L666.17,208.31 L667.75,209.41 L669.34,210.50 L670.93,211.58 L672.52,212.64 L674.11,213.69 L675.70,214.72 L677.29,215.74 L678.88,216.72 L680.47,217.69 L682.06,218.62 L683.65,219.53 L685.24,220.41 L686.83,221.26 L688.42,222.07 L690.01,222.85 L691.59,223.59 L693.18,224.29 L694.77,224.95 L696.36,225.57 L697.95,226.14 L699.54,226.67 L701.13,227.16 L702.72,227.60 L704.31,227.99 L705.90,228.34 L707.49,228.63 L709.08,228.88 L710.67,229.08 L712.26,229.22 L713.85,229.32 L715.43,229.36 L717.02,229.36 L718.61,229.30 L720.20,229.19 L721.79,229.04 L723.38,228.83 L724.97,228.57 L726.56,228.26 L728.15,227.91 L729.74,227.50 L731.33,227.05 L732.92,226.56 L734.51,226.01 L736.10,225.43 L737.69,224.80 L739.27,224.13 L740.86,223.42 L742.45,222.67 L744.04,221.89 L745.63,221.07 L747.22,220.22 L748.81,219.33 L750.40,218.42 L751.99,217.47 L753.58,216.50 L755.17,215.51 L756.76,214.49 L758.35,213.46 L759.94,212.41 L761.53,211.34 L763.11,210.26 L764.70,209.16 L766.29,208.06 L767.88,206.95 L769.47,205.84 L771.06,204.73 L772.65,203.62 L774.24,202.51 L775.83,201.40 L777.42,200.30 L779.01,199.22 L780.60,198.14 L782.19,197.08 L783.78,196.04 L785.37,195.01 L786.95,194.01 L788.54,193.02 L790.13,192.07 L791.72,191.14 L793.31,190.24 L794.90,189.37 L796.49,188.53 L798.08,187.72 L799.67,186.96 L801.26,186.23 L802.85,185.54 L804.44,184.89 L806.03,184.28 L807.62,183.72 L809.21,183.20 L810.79,182.72 L812.38,182.29 L813.97,181.91 L815.56,181.58 L817.15,181.30 L818.74,181.07 L820.33,180.88 L821.92,180.75 L823.51,180.67 L825.10,180.63 L826.69,180.65 L828.28,180.72 L829.87,180.84 L831.46,181.01 L833.05,181.24 L834.63,181.51 L836.22,181.83 L837.81,182.19 L839.40,182.61 L840.99,183.07 L842.58,183.58 L844.17,184.13 L845.76,184.73 L847.35,185.37 L848.94,186.05 L850.53,186.77 L852.12,187.53 L853.71,188.32 L855.30,189.15 L856.89,190.01 L858.47,190.91 L860.06,191.83 L861.65,192.78 L863.24,193.75 L864.83,194.75 L866.42,195.77 L868.01,196.81 L869.60,197.87 L871.19,198.94 L872.78,200.03 L874.37,201.12 L875.96,202.23 L877.55,203.33 L879.14,204.45 L880.73,205.56 L882.31,206.67 L883.90,207.78 L885.49,208.89 L887.08,209.98 L888.67,211.06 L890.26,212.14 L891.85,213.19 L893.44,214.23 L895.03,215.25 L896.62,216.25 L898.21,217.23 L899.80,218.18 L901.39,219.10 L902.98,219.99 L904.57,220.86 L906.15,221.69 L907.74,222.48 L909.33,223.24 L910.92,223.96 L912.51,224.64 L914.10,225.27 L915.69,225.87 L917.28,226.42 L918.87,226.93 L920.46,227.39 L922.05,227.81 L923.64,228.18 L925.23,228.50 L926.82,228.77 L928.41,228.99 L929.99,229.16 L931.58,229.28 L933.17,229.35 L934.76,229.37 L936.35,229.33 L937.94,229.25 L939.53,229.12 L941.12,228.93 L942.71,228.70 L944.30,228.42 L945.89,228.08 L947.48,227.70 L949.07,227.27 L950.66,226.80 L952.25,226.28 L953.83,225.72 L955.42,225.11 L957.01,224.46 L958.60,223.77 L960.19,223.04 L961.78,222.27 L963.37,221.47 L964.96,220.63 L966.55,219.76 L968.14,218.86 L969.73,217.93 L971.32,216.97 L972.91,215.99 L974.50,214.98 L976.09,213.96 L977.67,212.91 L979.26,211.85 L980.85,210.78 L982.44,209.69 L984.03,208.59 L985.62,207.49 L987.21,206.38 L988.80,205.26" stroke="#0000ff"/>
<path d="M35.20,214.20 L36.79,214.56 L38.38,214.89 L39.97,215.21 L41.56,215.50 L43.15,215.77 L44.74,216.02 L46.33,216.25 L47.91,216.45 L49.50,216.63 L51.09,216.78 L52.68,216.91 L54.27,217.02 L55.86,217.10 L57.45,217.15 L59.04,217.18 L60.63,217.18 L62.22,217.16 L63.81,217.11 L65.40,217.04 L66.99,216.94 L68.58,216.82 L70.17,216.67 L71.75,216.50 L73.34,216.30 L74.93,216.08 L76.52,215.84 L78.11,215.58 L79.70,215.29 L81.29,214.98 L82.88,214.65 L84.47,214.30 L86.06,213.93 L87.65,213.54 L89.24,213.14 L90.83,212.72 L92.42,212.28 L94.01,211.82 L95.59,211.35 L97.18,210.87 L98.77,210.38 L100.36,209.87 L101.95,209.36 L103.54,208.83 L105.13,208.30 L106.72,207.76 L108.31,207.22 L109.90,206.67 L111.49,206.11 L113.08,205.56 L114.67,205.00 L116.26,204.45 L117.85,203.89 L119.43,203.34 L121.02,202.79 L122.61,202.24 L124.20,201.70 L125.79,201.17 L127.38,200.65 L128.97,200.13 L130.56,199.63 L132.15,199.13 L133.74,198.65 L135.33,198.18 L136.92,197.73 L138.51,197.29 L140.10,196.87 L141.69,196.46 L143.27,196.07 L144.86,195.70 L146.45,195.35 L148.04,195.02 L149.63,194.71 L151.22,194.43 L152.81,194.16 L154.40,193.92 L155.99,193.70 L157.58,193.50 L159.17,193.33 L160.76,193.18 L162.35,193.06 L163.94,192.96 L165.53,192.89 L167.11,192.84 L168.70,192.82 L170.29,192.82 L171.88,192.85 L173.47,192.90 L175.06,192.98 L176.65,193.09 L178.24,193.22 L179.83,193.37 L181.42,193.55 L183.01,193.75 L184.60,193.98 L186.19,194.23 L187.78,194.50 L189.37,194.79 L190.95,195.10 L192.54,195.44 L194.13,195.79 L195.72,196.17 L197.31,196.56 L198.90,196.97 L200.49,197.40 L202.08,197.84 L203.67,198.30 L205.26,198.77 L206.85,199.25 L208.44,199.75 L210.03,200.26 L211.62,200.78 L213.21,201.30 L214.79,201.84 L216.38,202.38 L217.97,202.93 L219.56,203.48 L221.15,204.03 L222.74,204.59 L224.33,205.14 L225.92,205.70 L227.51,206.25 L229.10,206.81 L230.69,207.35 L232.28,207.90 L233.87,208.44 L235.46,208.97 L237.05,209.49 L238.63,210.00 L240.22,210.50 L241.81,210.99 L243.40,211.47 L244.99,211.94 L246.58,212.39 L248.17,212.82 L249.76,213.24 L251.35,213.64 L252.94,214.03 L254.53,214.39 L256.12,214.74 L257.71,215.06 L259.30,215.36 L260.89,215.65 L262.47,215.90 L264.06,216.14 L265.65,216.36 L267.24,216.54 L268.83,216.71 L270.42,216.85 L272.01,216.97 L273.60,217.06 L275.19,217.13 L276.78,217.17 L278.37,217.18 L279.96,217.17 L281.55,217.14 L283.14,217.08 L284.73,216.99 L286.31,216.88 L287.90,216.75 L289.49,216.59 L291.08,216.40 L292.67,216.19 L294.26,215.96 L295.85,215.71 L297.44,215.43 L299.03,215.13 L300.62,214.81 L302.21,214.47 L303.80,214.11 L305.39,213.73 L306.98,213.33 L308.57,212.92 L310.15,212.49 L311.74,212.04 L313.33,211.58 L314.92,211.11 L316.51,210.62 L318.10,210.12 L319.69,209.61 L321.28,209.09 L322.87,208.56 L324.46,208.02 L326.05,207.48 L327.64,206.93 L329.23,206.38 L330.82,205.83 L332.41,205.27 L333.99,204.71 L335.58,204.16 L337.17,203.60 L338.76,203.05 L340.35,202.50 L341.94,201.96 L343.53,201.43 L345.12,200.90 L346.71,200.38 L348.30,199.87 L349.89,199.37 L351.48,198.88 L353.07,198.40 L354.66,197.94 L356.25,197.50 L357.83,197.07 L359.42,196.65 L361.01,196.26 L362.60,195.88 L364.19,195.52 L365.78,195.18 L367.37,194.86 L368.96,194.56 L370.55,194.29 L372.14,194.03 L373.73,193.80 L375.32,193.59 L376.91,193.41 L378.50,193.25 L380.09,193.12 L381.67,193.01 L383.26,192.92 L384.85,192.86 L386.44,192.83 L388.03,192.82 L389.62,192.83 L391.21,192.88 L392.80,192.94 L394.39,193.03 L395.98,193.15 L397.57,193.29 L399.16,193.46 L400.75,193.65 L402.34,193.87 L403.93,194.10 L405.51,194.36 L407.10,194.65 L408.69,194.95 L410.28,195.28 L411.87,195.62 L413.46,195.99 L415.05,196.37 L416.64,196.77 L418.23,197.19 L419.82,197.63 L421.41,198.08 L423.00,198.54 L424.59,199.02 L426.18,199.51 L427.77,200.01 L429.35,200.53 L430.94,201.05 L432.53,201.58 L434.12,202.12 L435.71,202.66 L437.30,203.21 L438.89,203.76 L440.48,204.32 L442.07,204.88 L443.66,205.43 L445.25,205.99 L446.84,206.54 L448.43,207.09 L450.02,207.64 L451.61,208.18 L453.19,208.71 L454.78,209.24 L456.37,209.76 L457.96,210.26 L459.55,210.76 L461.14,211.25 L462.73,211.72 L464.32,212.17 L465.91,212.62 L467.50,213.04 L469.09,213.45 L470.68,213.84 L472.27,214.22 L473.86,214.57 L475.45,214.91 L477.03,215.22 L478.62,215.51 L480.21,215.78 L481.80,216.03 L483.39,216.26 L484.98,216.46 L486.57,216.63 L488.16,216.79 L489.75,216.92 L491.34,217.02 L492.93,217.10 L494.52,217.15 L496.11,217.18 L497.70,217.18 L499.29,217.16 L500.87,217.11 L502.46,217.04 L504.05,216.94 L505.64,216.81 L507.23,216.66 L508.82,216.49 L510.41,216.30 L512.00,216.07 L513.59,215.83 L515.18,215.57 L516.77,215.28 L518.36,214.97 L519.95,214.64 L521.54,214.29 L523.13,213.92 L524.71,213.53 L526.30,213.12 L527.89,212.70 L529.48,212.26 L531.07,211.80 L532.66,211.33 L534.25,210.85 L535.84,210.36 L537.43,209.85 L539.02,209.34 L540.61,208.81 L542.20,208.28 L543.79,207.74 L545.38,207.19 L546.97,206.64 L548.55,206.09 L550.14,205.54 L551.73,204.98 L553.32,204.42 L554.91,203.87 L556.50,203.31 L558.09,202.77 L559.68,202.22 L561.27,201.68 L562.86,201.15 L564.45,200.62 L566.04,200.11 L567.63,199.61 L569.22,199.11 L570.81,198.63 L572.39,198.16 L573.98,197.71 L575.57,197.27 L577.16,196.85 L578.75,196.44 L580.34,196.06 L581.93,195.69 L583.52,195.34 L585.11,195.01 L586.70,194.70 L588.29,194.41 L589.88,194.15 L591.47,193.91 L593.06,193.69 L594.65,193.49 L596.23,193.32 L597.82,193.18 L599.41,193.05 L601.00,192.96 L602.59,192.89 L604.18,192.84 L605.77,192.82 L607.36,192.82 L608.95,192.85 L610.54,192.91 L612.13,192.99 L613.72,193.09 L615.31,193.22 L616.90,193.38 L618.49,193.56 L620.07,193.76 L621.66,193.99 L623.25,194.24 L624.84,194.51 L626.43,194.80 L628.02,195.12 L629.61,195.45 L631.20,195.81 L632.79,196.18 L634.38,196.58 L635.97,196.99 L637.56,197.42 L639.15,197.86 L640.74,198.32 L642.33,198.79 L643.91,199.28 L645.50,199.77 L647.09,200.28 L648.68,200.80 L650.27,201.33 L651.86,201.86 L653.45,202.40 L655.04,202.95 L656.63,203.50 L658.22,204.05 L659.81,204.61 L661.40,205.17 L662.99,205.72 L664.58,206.28 L666.17,206.83 L667.75,207.38 L669.34,207.92 L670.93,208.46 L672.52,208.99 L674.11,209.51 L675.70,210.02 L677.29,210.52 L678.88,211.01 L680.47,211.49 L682.06,211.96 L683.65,212.41 L685.24,212.84 L686.83,213.26 L688.42,213.66 L690.01,214.04 L691.59,214.41 L693.18,214.75 L694.77,215.07 L696.36,215.38 L697.95,215.66 L699.54,215.92 L701.13,216.15 L702.72,216.36 L704.31,216.55 L705.90,216.72 L707.49,216.86 L709.08,216.97 L710.67,217.06 L712.26,217.13 L713.85,217.17 L715.43,217.18 L717.02,217.17 L718.61,217.14 L720.20,217.07 L721.79,216.99 L723.38,216.88 L724.97,216.74 L726.56,216.58 L728.15,216.39 L729.74,216.18 L731.33,215.95 L732.92,215.70 L734.51,215.42 L736.10,215.12 L737.69,214.80 L739.27,214.46 L740.86,214.10 L742.45,213.72 L744.04,213.32 L745.63,212.90 L747.22,212.47 L748.81,212.02 L750.40,211.56 L751.99,211.08 L753.58,210.60 L755.17,210.10 L756.76,209.59 L758.35,209.06 L759.94,208.54 L761.53,208.00 L763.11,207.46 L764.70,206.91 L766.29,206.36 L767.88,205.80 L769.47,205.25 L771.06,204.69 L772.65,204.13 L774.24,203.58 L775.83,203.03 L777.42,202.48 L779.01,201.94 L780.60,201.40 L782.19,200.87 L783.78,200.36 L785.37,199.85 L786.95,199.35 L788.54,198.86 L790.13,198.39 L791.72,197.92 L793.31,197.48 L794.90,197.05 L796.49,196.64 L798.08,196.24 L799.67,195.86 L801.26,195.50 L802.85,195.16 L804.44,194.85 L806.03,194.55 L807.62,194.27 L809.21,194.02 L810.79,193.79 L812.38,193.58 L813.97,193.40 L815.56,193.24 L817.15,193.11 L818.74,193.00 L820.33,192.92 L821.92,192.86 L823.51,192.83 L825.10,192.82 L826.69,192.83 L828.28,192.88 L829.87,192.95 L831.46,193.04 L833.05,193.16 L834.63,193.30 L836.22,193.47 L837.81,193.66 L839.40,193.88 L840.99,194.11 L842.58,194.37 L844.17,194.66 L845.76,194.96 L847.35,195.29 L848.94,195.64 L850.53,196.00 L852.12,196.39 L853.71,196.79 L855.30,197.21 L856.89,197.64 L858.47,198.10 L860.06,198.56 L861.65,199.04 L863.24,199.53 L864.83,200.04 L866.42,200.55 L868.01,201.07 L869.60,201.60 L871.19,202.14 L872.78,202.69 L874.37,203.23 L875.96,203.79 L877.55,204.34 L879.14,204.90 L880.73,205.46 L882.31,206.01 L883.90,206.56 L885.49,207.12 L887.08,207.66 L888.67,208.20 L890.26,208.74 L891.85,209.26 L893.44,209.78 L895.03,210.29 L896.62,210.78 L898.21,211.27 L899.80,211.74 L901.39,212.19 L902.98,212.63 L904.57,213.06 L906.15,213.47 L907.74,213.86 L909.33,214.23 L910.92,214.59 L912.51,214.92 L914.10,215.23 L915.69,215.52 L917.28,215.79 L918.87,216.04 L920.46,216.26 L922.05,216.46 L923.64,216.64 L925.23,216.79 L926.82,216.92 L928.41,217.02 L929.99,217.10 L931.58,217.15 L933.17,217.18 L934.76,217.18 L936.35,217.16 L937.94,217.11 L939.53,217.03 L941.12,216.93 L942.71,216.81 L944.30,216.66 L945.89,216.48 L947.48,216.29 L949.07,216.06 L950.66,215.82 L952.25,215.55 L953.83,215.26 L955.42,214.95 L957.01,214.62 L958.60,214.27 L960.19,213.90 L961.78,213.51 L963.37,213.10 L964.96,212.68 L966.55,212.24 L968.14,211.78 L969.73,211.31 L971.32,210.83 L972.91,210.34 L974.50,209.83 L976.09,209.31 L977.67,208.79 L979.26,208.26 L980.85,207.72 L982.44,207.17 L984.03,206.62 L985.62,206.07 L987.21,205.51 L988.80,204.96" stroke="#00c0c0"/>
<path d="M35.20,137.49 L36.79,140.85 L38.38,144.34 L39.97,147.95 L41.56,151.68 L43.15,155.53 L44.74,159.48 L46.33,163.52 L47.91,167.65 L49.50,171.86 L51.09,176.14 L52.68,180.47 L54.27,184.86 L55.86,189.29 L57.45,193.76 L59.04,198.24 L60.63,202.74 L62.22,207.25 L63.81,211.75 L65.40,216.24 L66.99,220.70 L68.58,225.13 L70.17,229.52 L71.75,233.86 L73.34,238.14 L74.93,242.34 L76.52,246.47 L78.11,250.52 L79.70,254.47 L81.29,258.31 L82.88,262.05 L84.47,265.66 L86.06,269.15 L87.65,272.50 L89.24,275.72 L90.83,278.78 L92.42,281.69 L94.01,284.44 L95.59,287.03 L97.18,289.44 L98.77,291.68 L100.36,293.74 L101.95,295.61 L103.54,297.29 L105.13,298.78 L106.72,300.07 L108.31,301.17 L109.90,302.06 L111.49,302.75 L113.08,303.24 L114.67,303.52 L116.26,303.60 L117.85,303.47 L119.43,303.13 L121.02,302.59 L122.61,301.85 L124.20,300.90 L125.79,299.76 L127.38,298.41 L128.97,296.87 L130.56,295.14 L132.15,293.22 L133.74,291.12 L135.33,288.83 L136.92,286.37 L138.51,283.75 L140.10,280.95 L141.69,278.00 L143.27,274.90 L144.86,271.65 L146.45,268.26 L148.04,264.74 L149.63,261.09 L151.22,257.33 L152.81,253.45 L154.40,249.48 L155.99,245.41 L157.58,241.26 L159.17,237.03 L160.76,232.74 L162.35,228.39 L163.94,223.99 L165.53,219.55 L167.11,215.08 L168.70,210.59 L170.29,206.08 L171.88,201.58 L173.47,197.08 L175.06,192.60 L176.65,188.14 L178.24,183.72 L179.83,179.34 L181.42,175.02 L183.01,170.76 L184.60,166.57 L186.19,162.46 L187.78,158.44 L189.37,154.52 L190.95,150.70 L192.54,147.00 L194.13,143.42 L195.72,139.96 L197.31,136.65 L198.90,133.47 L200.49,130.45 L202.08,127.58 L203.67,124.87 L205.26,122.33 L206.85,119.96 L208.44,117.77 L210.03,115.76 L211.62,113.94 L213.21,112.30 L214.79,110.86 L216.38,109.62 L217.97,108.58 L219.56,107.74 L221.15,107.10 L222.74,106.67 L224.33,106.44 L225.92,106.42 L227.51,106.60 L229.10,106.99 L230.69,107.58 L232.28,108.38 L233.87,109.38 L235.46,110.58 L237.05,111.97 L238.63,113.56 L240.22,115.34 L241.81,117.31 L243.40,119.46 L244.99,121.79 L246.58,124.29 L248.17,126.97 L249.76,129.80 L251.35,132.79 L252.94,135.94 L254.53,139.22 L256.12,142.65 L257.71,146.20 L259.30,149.88 L260.89,153.67 L262.47,157.57 L264.06,161.57 L265.65,165.66 L267.24,169.83 L268.83,174.08 L270.42,178.39 L272.01,182.75 L273.60,187.17 L275.19,191.61 L276.78,196.09 L278.37,200.59 L279.96,205.09 L281.55,209.60 L283.14,214.09 L284.73,218.57 L286.31,223.02 L287.90,227.43 L289.49,231.79 L291.08,236.10 L292.67,240.34 L294.26,244.51 L295.85,248.59 L297.44,252.59 L299.03,256.48 L300.62,260.27 L302.21,263.94 L303.80,267.49 L305.39,270.91 L306.98,274.19 L308.57,277.33 L310.15,280.32 L311.74,283.15 L313.33,285.81 L314.92,288.31 L316.51,290.63 L318.10,292.77 L319.69,294.73 L321.28,296.51 L322.87,298.09 L324.46,299.48 L326.05,300.67 L327.64,301.66 L329.23,302.45 L330.82,303.03 L332.41,303.41 L333.99,303.59 L335.58,303.56 L337.17,303.32 L338.76,302.88 L340.35,302.23 L341.94,301.38 L343.53,300.33 L345.12,299.08 L346.71,297.63 L348.30,295.99 L349.89,294.16 L351.48,292.15 L353.07,289.95 L354.66,287.57 L356.25,285.03 L357.83,282.31 L359.42,279.43 L361.01,276.40 L362.60,273.22 L364.19,269.90 L365.78,266.44 L367.37,262.85 L368.96,259.14 L370.55,255.32 L372.14,251.39 L373.73,247.37 L375.32,243.26 L376.91,239.07 L378.50,234.80 L380.09,230.48 L381.67,226.10 L383.26,221.68 L384.85,217.22 L386.44,212.74 L388.03,208.24 L389.62,203.73 L391.21,199.23 L392.80,194.74 L394.39,190.27 L395.98,185.83 L397.57,181.43 L399.16,177.08 L400.75,172.79 L402.34,168.57 L403.93,164.42 L405.51,160.36 L407.10,156.39 L408.69,152.52 L410.28,148.76 L411.87,145.12 L413.46,141.60 L415.05,138.22 L416.64,134.97 L418.23,131.88 L419.82,128.93 L421.41,126.14 L423.00,123.52 L424.59,121.07 L426.18,118.79 L427.77,116.70 L429.35,114.79 L430.94,113.06 L432.53,111.53 L434.12,110.19 L435.71,109.05 L437.30,108.12 L438.89,107.38 L440.48,106.85 L442.07,106.52 L443.66,106.40 L445.25,106.49 L446.84,106.78 L448.43,107.27 L450.02,107.97 L451.61,108.87 L453.19,109.98 L454.78,111.28 L456.37,112.77 L457.96,114.46 L459.55,116.34 L461.14,118.41 L462.73,120.65 L464.32,123.07 L465.91,125.67 L467.50,128.42 L469.09,131.34 L470.68,134.41 L472.27,137.63 L473.86,140.99 L475.45,144.48 L477.03,148.10 L478.62,151.84 L480.21,155.69 L481.80,159.64 L483.39,163.69 L484.98,167.82 L486.57,172.04 L488.16,176.32 L489.75,180.66 L491.34,185.05 L492.93,189.48 L494.52,193.94 L496.11,198.43 L497.70,202.93 L499.29,207.44 L500.87,211.94 L502.46,216.43 L504.05,220.89 L505.64,225.32 L507.23,229.70 L508.82,234.04 L510.41,238.31 L512.00,242.52 L513.59,246.65 L515.18,250.69 L516.77,254.63 L518.36,258.47 L519.95,262.20 L521.54,265.81 L523.13,269.29 L524.71,272.64 L526.30,275.85 L527.89,278.91 L529.48,281.81 L531.07,284.56 L532.66,287.13 L534.25,289.54 L535.84,291.77 L537.43,293.82 L539.02,295.68 L540.61,297.36 L542.20,298.84 L543.79,300.12 L545.38,301.21 L546.97,302.09 L548.55,302.78 L550.14,303.26 L551.73,303.53 L553.32,303.60 L554.91,303.46 L556.50,303.11 L558.09,302.57 L559.68,301.81 L561.27,300.86 L562.86,299.70 L564.45,298.35 L566.04,296.80 L567.63,295.06 L569.22,293.14 L570.81,291.03 L572.39,288.73 L573.98,286.27 L575.57,283.63 L577.16,280.83 L578.75,277.87 L580.34,274.76 L581.93,271.51 L583.52,268.11 L585.11,264.58 L586.70,260.93 L588.29,257.17 L589.88,253.29 L591.47,249.31 L593.06,245.24 L594.65,241.09 L596.23,236.86 L597.82,232.56 L599.41,228.20 L601.00,223.80 L602.59,219.36 L604.18,214.89 L605.77,210.40 L607.36,205.89 L608.95,201.39 L610.54,196.89 L612.13,192.41 L613.72,187.95 L615.31,183.53 L616.90,179.16 L618.49,174.84 L620.07,170.58 L621.66,166.40 L623.25,162.29 L624.84,158.28 L626.43,154.36 L628.02,150.55 L629.61,146.85 L631.20,143.27 L632.79,139.82 L634.38,136.51 L635.97,133.34 L637.56,130.32 L639.15,127.46 L640.74,124.76 L642.33,122.22 L643.91,119.86 L645.50,117.68 L647.09,115.68 L648.68,113.86 L650.27,112.24 L651.86,110.81 L653.45,109.58 L655.04,108.54 L656.63,107.71 L658.22,107.08 L659.81,106.65 L661.40,106.43 L662.99,106.42 L664.58,106.61 L666.17,107.01 L667.75,107.61 L669.34,108.42 L670.93,109.42 L672.52,110.63 L674.11,112.03 L675.70,113.63 L677.29,115.42 L678.88,117.40 L680.47,119.55 L682.06,121.89 L683.65,124.40 L685.24,127.08 L686.83,129.92 L688.42,132.92 L690.01,136.07 L691.59,139.36 L693.18,142.79 L694.77,146.35 L696.36,150.04 L697.95,153.83 L699.54,157.74 L701.13,161.74 L702.72,165.83 L704.31,170.01 L705.90,174.26 L707.49,178.57 L709.08,182.94 L710.67,187.35 L712.26,191.80 L713.85,196.28 L715.43,200.78 L717.02,205.28 L718.61,209.79 L720.20,214.28 L721.79,218.75 L723.38,223.20 L724.97,227.61 L726.56,231.97 L728.15,236.28 L729.74,240.51 L731.33,244.68 L732.92,248.76 L734.51,252.75 L736.10,256.64 L737.69,260.43 L739.27,264.10 L740.86,267.64 L742.45,271.05 L744.04,274.33 L745.63,277.46 L747.22,280.44 L748.81,283.26 L750.40,285.92 L751.99,288.41 L753.58,290.72 L755.17,292.86 L756.76,294.81 L758.35,296.58 L759.94,298.15 L761.53,299.53 L763.11,300.71 L764.70,301.70 L766.29,302.48 L767.88,303.05 L769.47,303.42 L771.06,303.59 L772.65,303.55 L774.24,303.31 L775.83,302.85 L777.42,302.20 L779.01,301.34 L780.60,300.28 L782.19,299.02 L783.78,297.57 L785.37,295.92 L786.95,294.08 L788.54,292.06 L790.13,289.85 L791.72,287.47 L793.31,284.92 L794.90,282.19 L796.49,279.31 L798.08,276.27 L799.67,273.08 L801.26,269.76 L802.85,266.29 L804.44,262.70 L806.03,258.98 L807.62,255.16 L809.21,251.23 L810.79,247.20 L812.38,243.09 L813.97,238.89 L815.56,234.62 L817.15,230.30 L818.74,225.92 L820.33,221.49 L821.92,217.03 L823.51,212.55 L825.10,208.05 L826.69,203.55 L828.28,199.04 L829.87,194.55 L831.46,190.08 L833.05,185.65 L834.63,181.25 L836.22,176.90 L837.81,172.61 L839.40,168.39 L840.99,164.25 L842.58,160.19 L844.17,156.22 L845.76,152.36 L847.35,148.61 L848.94,144.97 L850.53,141.46 L852.12,138.08 L853.71,134.84 L855.30,131.75 L856.89,128.81 L858.47,126.03 L860.06,123.42 L861.65,120.97 L863.24,118.70 L864.83,116.61 L866.42,114.71 L868.01,112.99 L869.60,111.47 L871.19,110.14 L872.78,109.01 L874.37,108.08 L875.96,107.35 L877.55,106.83 L879.14,106.51 L880.73,106.40 L882.31,106.49 L883.90,106.79 L885.49,107.30 L887.08,108.00 L888.67,108.92 L890.26,110.03 L891.85,111.34 L893.44,112.84 L895.03,114.54 L896.62,116.43 L898.21,118.50 L899.80,120.75 L901.39,123.18 L902.98,125.78 L904.57,128.54 L906.15,131.47 L907.74,134.54 L909.33,137.77 L910.92,141.13 L912.51,144.63 L914.10,148.26 L915.69,152.00 L917.28,155.86 L918.87,159.81 L920.46,163.86 L922.05,168.00 L923.64,172.21 L925.23,176.50 L926.82,180.84 L928.41,185.23 L929.99,189.67 L931.58,194.13 L933.17,198.62 L934.76,203.12 L936.35,207.63 L937.94,212.13 L939.53,216.61 L941.12,221.08 L942.71,225.50 L944.30,229.89 L945.89,234.22 L947.48,238.49 L949.07,242.69 L950.66,246.82 L952.25,250.85 L953.83,254.79 L955.42,258.63 L957.01,262.35 L958.60,265.96 L960.19,269.44 L961.78,272.78 L963.37,275.98 L964.96,279.03 L966.55,281.93 L968.14,284.67 L969.73,287.24 L971.32,289.64 L972.91,291.86 L974.50,293.90 L976.09,295.76 L977.67,297.42 L979.26,298.90 L980.85,300.17 L982.44,301.25 L984.03,302.13 L985.62,302.80 L987.21,303.27 L988.80,303.54" stroke="#00ff00"/>
</g>
<rect x="34" y="102" width="956" height="2" fill="#c0c0c0"/><rect x="34" y="306" width="956" height="2" fill="#c0c0c0"/><rect x="34" y="102" width="2" height="206" fill="#c0c0c0"/><rect x="988" y="102" width="2" height="206" fill="#c0c0c0"/>
<line x1="30" y1="103" x2="35" y2="103" stroke="#c0c0c0" stroke-width="1.7"/>
<line x1="989" y1="103" x2="994.5" y2="103" stroke="#c0c0c0" stroke-width="1.7"/>
<text x="31.2" y="106.0" font-family="Liberation Sans" font-size="8.2" fill="#cccccc" font-weight="normal" text-anchor="end" textLength="21.03" lengthAdjust="spacingAndGlyphs" >180V</text>
<text x="1016.6" y="106.0" font-family="Liberation Sans" font-size="8.2" fill="#cccccc" font-weight="normal" text-anchor="end" textLength="18.52" lengthAdjust="spacingAndGlyphs" >1.8A</text>
<line x1="30" y1="120.5" x2="35" y2="120.5" stroke="#c0c0c0" stroke-width="1.7"/>
<line x1="989" y1="120.5" x2="994.5" y2="120.5" stroke="#c0c0c0" stroke-width="1.7"/>
<text x="31.2" y="123.0" font-family="Liberation Sans" font-size="8.2" fill="#cccccc" font-weight="normal" text-anchor="end" textLength="21.03" lengthAdjust="spacingAndGlyphs" >150V</text>
<text x="1016.6" y="123.0" font-family="Liberation Sans" font-size="8.2" fill="#cccccc" font-weight="normal" text-anchor="end" textLength="18.52" lengthAdjust="spacingAndGlyphs" >1.5A</text>
<line x1="30" y1="137.5" x2="35" y2="137.5" stroke="#c0c0c0" stroke-width="1.7"/>
<line x1="989" y1="137.5" x2="994.5" y2="137.5" stroke="#c0c0c0" stroke-width="1.7"/>
<text x="31.2" y="140.0" font-family="Liberation Sans" font-size="8.2" fill="#cccccc" font-weight="normal" text-anchor="end" textLength="21.03" lengthAdjust="spacingAndGlyphs" >120V</text>
<text x="1016.6" y="140.0" font-family="Liberation Sans" font-size="8.2" fill="#cccccc" font-weight="normal" text-anchor="end" textLength="18.52" lengthAdjust="spacingAndGlyphs" >1.2A</text>
<line x1="30" y1="154.5" x2="35" y2="154.5" stroke="#c0c0c0" stroke-width="1.7"/>
<line x1="989" y1="154.5" x2="994.5" y2="154.5" stroke="#c0c0c0" stroke-width="1.7"/>
<text x="31.2" y="157.0" font-family="Liberation Sans" font-size="8.2" fill="#cccccc" font-weight="normal" text-anchor="end" textLength="16.03" lengthAdjust="spacingAndGlyphs" >90V</text>
<text x="1016.6" y="157.0" font-family="Liberation Sans" font-size="8.2" fill="#cccccc" font-weight="normal" text-anchor="end" textLength="18.52" lengthAdjust="spacingAndGlyphs" >0.9A</text>
<line x1="30" y1="171.5" x2="35" y2="171.5" stroke="#c0c0c0" stroke-width="1.7"/>
<line x1="989" y1="171.5" x2="994.5" y2="171.5" stroke="#c0c0c0" stroke-width="1.7"/>
<text x="31.2" y="174.0" font-family="Liberation Sans" font-size="8.2" fill="#cccccc" font-weight="normal" text-anchor="end" textLength="16.03" lengthAdjust="spacingAndGlyphs" >60V</text>
<text x="1016.6" y="174.0" font-family="Liberation Sans" font-size="8.2" fill="#cccccc" font-weight="normal" text-anchor="end" textLength="18.52" lengthAdjust="spacingAndGlyphs" >0.6A</text>
<line x1="30" y1="188.5" x2="35" y2="188.5" stroke="#c0c0c0" stroke-width="1.7"/>
<line x1="989" y1="188.5" x2="994.5" y2="188.5" stroke="#c0c0c0" stroke-width="1.7"/>
<text x="31.2" y="191.0" font-family="Liberation Sans" font-size="8.2" fill="#cccccc" font-weight="normal" text-anchor="end" textLength="16.03" lengthAdjust="spacingAndGlyphs" >30V</text>
<text x="1016.6" y="191.0" font-family="Liberation Sans" font-size="8.2" fill="#cccccc" font-weight="normal" text-anchor="end" textLength="18.52" lengthAdjust="spacingAndGlyphs" >0.3A</text>
<line x1="30" y1="205.5" x2="35" y2="205.5" stroke="#c0c0c0" stroke-width="1.7"/>
<line x1="989" y1="205.5" x2="994.5" y2="205.5" stroke="#c0c0c0" stroke-width="1.7"/>
<text x="31.2" y="208.0" font-family="Liberation Sans" font-size="8.2" fill="#cccccc" font-weight="normal" text-anchor="end" textLength="11.01" lengthAdjust="spacingAndGlyphs" >0V</text>
<text x="1016.6" y="208.0" font-family="Liberation Sans" font-size="8.2" fill="#cccccc" font-weight="normal" text-anchor="end" textLength="18.52" lengthAdjust="spacingAndGlyphs" >0.0A</text>
<line x1="30" y1="222.5" x2="35" y2="222.5" stroke="#c0c0c0" stroke-width="1.7"/>
<line x1="989" y1="222.5" x2="994.5" y2="222.5" stroke="#c0c0c0" stroke-width="1.7"/>
<text x="31.2" y="225.0" font-family="Liberation Sans" font-size="8.2" fill="#cccccc" font-weight="normal" text-anchor="end" textLength="19.02" lengthAdjust="spacingAndGlyphs" >-30V</text>
<text x="1016.6" y="225.0" font-family="Liberation Sans" font-size="8.2" fill="#cccccc" font-weight="normal" text-anchor="end" textLength="21.53" lengthAdjust="spacingAndGlyphs" >-0.3A</text>
<line x1="30" y1="239.5" x2="35" y2="239.5" stroke="#c0c0c0" stroke-width="1.7"/>
<line x1="989" y1="239.5" x2="994.5" y2="239.5" stroke="#c0c0c0" stroke-width="1.7"/>
<text x="31.2" y="242.0" font-family="Liberation Sans" font-size="8.2" fill="#cccccc" font-weight="normal" text-anchor="end" textLength="19.02" lengthAdjust="spacingAndGlyphs" >-60V</text>
<text x="1016.6" y="242.0" font-family="Liberation Sans" font-size="8.2" fill="#cccccc" font-weight="normal" text-anchor="end" textLength="21.53" lengthAdjust="spacingAndGlyphs" >-0.6A</text>
<line x1="30" y1="256.5" x2="35" y2="256.5" stroke="#c0c0c0" stroke-width="1.7"/>
<line x1="989" y1="256.5" x2="994.5" y2="256.5" stroke="#c0c0c0" stroke-width="1.7"/>
<text x="31.2" y="259.0" font-family="Liberation Sans" font-size="8.2" fill="#cccccc" font-weight="normal" text-anchor="end" textLength="19.02" lengthAdjust="spacingAndGlyphs" >-90V</text>
<text x="1016.6" y="259.0" font-family="Liberation Sans" font-size="8.2" fill="#cccccc" font-weight="normal" text-anchor="end" textLength="21.53" lengthAdjust="spacingAndGlyphs" >-0.9A</text>
<line x1="30" y1="273.5" x2="35" y2="273.5" stroke="#c0c0c0" stroke-width="1.7"/>
<line x1="989" y1="273.5" x2="994.5" y2="273.5" stroke="#c0c0c0" stroke-width="1.7"/>
<text x="31.2" y="276.0" font-family="Liberation Sans" font-size="8.2" fill="#cccccc" font-weight="normal" text-anchor="end" textLength="24.04" lengthAdjust="spacingAndGlyphs" >-120V</text>
<text x="1016.6" y="276.0" font-family="Liberation Sans" font-size="8.2" fill="#cccccc" font-weight="normal" text-anchor="end" textLength="21.53" lengthAdjust="spacingAndGlyphs" >-1.2A</text>
<line x1="30" y1="290.5" x2="35" y2="290.5" stroke="#c0c0c0" stroke-width="1.7"/>
<line x1="989" y1="290.5" x2="994.5" y2="290.5" stroke="#c0c0c0" stroke-width="1.7"/>
<text x="31.2" y="293.0" font-family="Liberation Sans" font-size="8.2" fill="#cccccc" font-weight="normal" text-anchor="end" textLength="24.04" lengthAdjust="spacingAndGlyphs" >-150V</text>
<text x="1016.6" y="293.0" font-family="Liberation Sans" font-size="8.2" fill="#cccccc" font-weight="normal" text-anchor="end" textLength="21.53" lengthAdjust="spacingAndGlyphs" >-1.5A</text>
<line x1="30" y1="307" x2="35" y2="307" stroke="#c0c0c0" stroke-width="1.7"/>
<line x1="989" y1="307" x2="994.5" y2="307" stroke="#c0c0c0" stroke-width="1.7"/>
<text x="31.2" y="310.0" font-family="Liberation Sans" font-size="8.2" fill="#cccccc" font-weight="normal" text-anchor="end" textLength="24.04" lengthAdjust="spacingAndGlyphs" >-180V</text>
<text x="1016.6" y="310.0" font-family="Liberation Sans" font-size="8.2" fill="#cccccc" font-weight="normal" text-anchor="end" textLength="21.53" lengthAdjust="spacingAndGlyphs" >-1.8A</text>
<line x1="35" y1="307" x2="35" y2="311.5" stroke="#c0c0c0" stroke-width="2"/>
<text x="35.2" y="319.6" font-family="Liberation Sans" font-size="8.2" fill="#cccccc" font-weight="normal" text-anchor="middle" textLength="37.5" lengthAdjust="spacingAndGlyphs" >499.38µs</text>
<line x1="127.5" y1="307" x2="127.5" y2="311.5" stroke="#c0c0c0" stroke-width="2"/>
<text x="127.5" y="319.6" font-family="Liberation Sans" font-size="8.2" fill="#cccccc" font-weight="normal" text-anchor="middle" textLength="37.5" lengthAdjust="spacingAndGlyphs" >499.44µs</text>
<line x1="219.5" y1="307" x2="219.5" y2="311.5" stroke="#c0c0c0" stroke-width="2"/>
<text x="219.8" y="319.6" font-family="Liberation Sans" font-size="8.2" fill="#cccccc" font-weight="normal" text-anchor="middle" textLength="37.5" lengthAdjust="spacingAndGlyphs" >499.50µs</text>
<line x1="312.5" y1="307" x2="312.5" y2="311.5" stroke="#c0c0c0" stroke-width="2"/>
<text x="312.1" y="319.6" font-family="Liberation Sans" font-size="8.2" fill="#cccccc" font-weight="normal" text-anchor="middle" textLength="37.5" lengthAdjust="spacingAndGlyphs" >499.56µs</text>
<line x1="404.5" y1="307" x2="404.5" y2="311.5" stroke="#c0c0c0" stroke-width="2"/>
<text x="404.4" y="319.6" font-family="Liberation Sans" font-size="8.2" fill="#cccccc" font-weight="normal" text-anchor="middle" textLength="37.5" lengthAdjust="spacingAndGlyphs" >499.62µs</text>
<line x1="496.5" y1="307" x2="496.5" y2="311.5" stroke="#c0c0c0" stroke-width="2"/>
<text x="496.7" y="319.6" font-family="Liberation Sans" font-size="8.2" fill="#cccccc" font-weight="normal" text-anchor="middle" textLength="37.5" lengthAdjust="spacingAndGlyphs" >499.68µs</text>
<line x1="589.5" y1="307" x2="589.5" y2="311.5" stroke="#c0c0c0" stroke-width="2"/>
<text x="589.0" y="319.6" font-family="Liberation Sans" font-size="8.2" fill="#cccccc" font-weight="normal" text-anchor="middle" textLength="37.5" lengthAdjust="spacingAndGlyphs" >499.74µs</text>
<line x1="681.5" y1="307" x2="681.5" y2="311.5" stroke="#c0c0c0" stroke-width="2"/>
<text x="681.3" y="319.6" font-family="Liberation Sans" font-size="8.2" fill="#cccccc" font-weight="normal" text-anchor="middle" textLength="37.5" lengthAdjust="spacingAndGlyphs" >499.80µs</text>
<line x1="773.5" y1="307" x2="773.5" y2="311.5" stroke="#c0c0c0" stroke-width="2"/>
<text x="773.6" y="319.6" font-family="Liberation Sans" font-size="8.2" fill="#cccccc" font-weight="normal" text-anchor="middle" textLength="37.5" lengthAdjust="spacingAndGlyphs" >499.86µs</text>
<line x1="865.5" y1="307" x2="865.5" y2="311.5" stroke="#c0c0c0" stroke-width="2"/>
<text x="865.9" y="319.6" font-family="Liberation Sans" font-size="8.2" fill="#cccccc" font-weight="normal" text-anchor="middle" textLength="37.5" lengthAdjust="spacingAndGlyphs" >499.92µs</text>
<line x1="958.5" y1="307" x2="958.5" y2="311.5" stroke="#c0c0c0" stroke-width="2"/>
<text x="958.2" y="319.6" font-family="Liberation Sans" font-size="8.2" fill="#cccccc" font-weight="normal" text-anchor="middle" textLength="37.5" lengthAdjust="spacingAndGlyphs" >499.98µs</text>
<text x="138.4" y="100" font-family="Liberation Sans" font-size="8.6" fill="#ff0000" font-weight="bold" text-anchor="start" textLength="31.6" lengthAdjust="spacingAndGlyphs" >V(n002)</text>
<text x="376" y="100" font-family="Liberation Sans" font-size="8.6" fill="#0000ff" font-weight="bold" text-anchor="start" textLength="31.8" lengthAdjust="spacingAndGlyphs" >V(n001)</text>
<text x="618.8" y="100" font-family="Liberation Sans" font-size="8.6" fill="#00b0b0" font-weight="bold" text-anchor="start" textLength="22.2" lengthAdjust="spacingAndGlyphs" >V(p1)</text>
<text x="858.8" y="100" font-family="Liberation Sans" font-size="8.6" fill="#00ff00" font-weight="bold" text-anchor="start" textLength="18.3" lengthAdjust="spacingAndGlyphs" >I(L1)</text>
<rect x="1.5" y="328.3" width="1021.5" height="1" fill="#5a6470"/>
<rect x="1.5" y="329" width="1021.5" height="258" fill="#bcd4ec"/>
<rect x="2" y="329.3" width="1021" height="20" fill="url(#gAct)"/>
<rect x="1.5" y="586" width="1021.5" height="1" fill="#2a8090"/><rect x="1.5" y="587" width="1021.5" height="1" fill="#303438"/><rect x="0" y="588" width="1024" height="1" fill="#ffffff"/>
<rect x="1022" y="329" width="1" height="258" fill="#3aa0c0"/><rect x="1023" y="329" width="1" height="259" fill="#6a7078"/>
<path d="M14.60,335.80 L11.40,338.10" stroke="#4040ff" stroke-width="1.00" opacity="0.8"/><rect x="9.90" y="337.90" width="2.40" height="5.60" fill="#0000ff"/><path d="M8.10,340.60 L10.00,340.60" stroke="#4040ff" stroke-width="1.00" opacity="0.7"/><path d="M12.70,343.70 L15.10,345.40" stroke="#0000ff" stroke-width="2.30" stroke-linecap="round"/>
<text x="20" y="344.2" font-family="Liberation Sans" font-size="8.4" fill="#333" font-weight="normal" text-anchor="start" textLength="57" lengthAdjust="spacingAndGlyphs" >rod25match.asc</text>
<rect x="948.2" y="334.4" width="22" height="12.9" rx="1.5" fill="#a3bcd8" stroke="#8fa9c6" stroke-width="0.8"/>
<rect x="948.7" y="334.9" width="21" height="6" rx="1" fill="#bcd0e6"/>
<rect x="972" y="334.4" width="22" height="12.9" rx="1.5" fill="#a3bcd8" stroke="#8fa9c6" stroke-width="0.8"/>
<rect x="972.5" y="334.9" width="21" height="6" rx="1" fill="#bcd0e6"/>
<rect x="995.1" y="334.4" width="22.4" height="12.9" rx="1.5" fill="#c8482e" stroke="#8a5a70" stroke-width="0.8"/>
<rect x="995.6" y="334.9" width="21.4" height="6" rx="1" fill="#e08a78"/>
<rect x="954.6" y="339.9" width="9" height="3" rx="1.2" fill="#f8f8f8" stroke="#6f6f6f" stroke-width="0.7"/>
<rect x="978.5" y="337" width="8.5" height="7.5" rx="0.8" fill="#aac4e0" stroke="#7b7b7b" stroke-width="0.6"/><rect x="980" y="339" width="5.5" height="3.5" fill="none" stroke="#f4f4f4" stroke-width="1.3"/>
<path d="M1003,337.6 L1009.6,343.8 M1009.6,337.6 L1003,343.8" stroke="#7b4040" stroke-width="3.2" stroke-linecap="round" opacity="0.7"/><path d="M1003,337.6 L1009.6,343.8 M1009.6,337.6 L1003,343.8" stroke="#f8f8f8" stroke-width="2" stroke-linecap="round"/>
<rect x="6.5" y="349" width="1011.5" height="232" fill="#c0c0c0"/>
<rect x="6.5" y="349" width="1011.5" height="232" fill="url(#grid)"/>
<rect x="6.5" y="349" width="1011.5" height="1" fill="#808080"/><rect x="6.5" y="349" width="1" height="232" fill="#808080"/>
<rect x="6.5" y="580.5" width="1011.5" height="1" fill="#e8eef4"/><rect x="1017.5" y="349" width="1" height="232" fill="#e8eef4"/>
<path d="M97.75,557.48 L97.75,506.49" stroke="#2020ff" stroke-width="1.35" fill="none" stroke-linejoin="miter"/>
<path d="M97.75,448.20 L97.75,397.21 L156.01,397.21" stroke="#2020ff" stroke-width="1.35" fill="none" stroke-linejoin="miter"/>
<path d="M228.83,397.21 L403.62,397.21 L403.62,440.92" stroke="#2020ff" stroke-width="1.35" fill="none" stroke-linejoin="miter"/>
<path d="M403.62,513.77 L403.62,557.48" stroke="#2020ff" stroke-width="1.35" fill="none" stroke-linejoin="miter"/>
<path d="M461.88,557.48 L461.88,513.77" stroke="#2020ff" stroke-width="1.35" fill="none" stroke-linejoin="miter"/>
<path d="M461.88,440.92 L461.88,397.21 L796.87,397.21" stroke="#2020ff" stroke-width="1.35" fill="none" stroke-linejoin="miter"/>
<path d="M534.70,397.21 L534.70,455.49" stroke="#2020ff" stroke-width="1.35" fill="none" stroke-linejoin="miter"/>
<path d="M534.70,513.77 L534.70,557.48" stroke="#2020ff" stroke-width="1.35" fill="none" stroke-linejoin="miter"/>
<path d="M855.13,397.21 L898.82,397.21 L898.82,440.92" stroke="#2020ff" stroke-width="1.35" fill="none" stroke-linejoin="miter"/>
<path d="M898.82,513.77 L898.82,557.48" stroke="#2020ff" stroke-width="1.35" fill="none" stroke-linejoin="miter"/>
<path d="M81.95,557.48 L113.55,557.48 L97.75,573.08 Z" stroke="#2020ff" stroke-width="1.35" fill="none" stroke-linejoin="miter"/>
<path d="M387.81,557.48 L419.42,557.48 L403.62,573.08 Z" stroke="#2020ff" stroke-width="1.35" fill="none" stroke-linejoin="miter"/>
<path d="M446.07,557.48 L477.68,557.48 L461.88,573.08 Z" stroke="#2020ff" stroke-width="1.35" fill="none" stroke-linejoin="miter"/>
<path d="M518.90,557.48 L550.50,557.48 L534.70,573.08 Z" stroke="#2020ff" stroke-width="1.35" fill="none" stroke-linejoin="miter"/>
<path d="M883.02,557.48 L914.62,557.48 L898.82,573.08 Z" stroke="#2020ff" stroke-width="1.35" fill="none" stroke-linejoin="miter"/>
<rect x="529.20" y="391.71" width="11" height="11" fill="#2020ff"/>
<path d="M156.01,397.21 L163.29,397.21 L170.57,382.64 L185.14,411.78 L199.70,382.64 L214.27,411.78 L221.55,397.21 L228.83,397.21" stroke="#2a2aa0" stroke-width="1.4" fill="none" stroke-linejoin="miter"/>
<path d="M898.82,440.92 L898.82,448.20 L913.39,455.49 L884.26,470.06 L913.39,484.63 L884.26,499.20 L898.82,506.49 L898.82,513.77" stroke="#2a2aa0" stroke-width="1.4" fill="none" stroke-linejoin="miter"/>
<path d="M97.75,448.20 L97.75,448.20" stroke="#2a2aa0" stroke-width="1.35" fill="none" stroke-linejoin="miter"/>
<circle cx="97.75" cy="477.35" r="29.2" stroke="#2a2aa0" stroke-width="1.4" fill="none"/>
<path d="M90.75,459.30 L104.75,459.30" stroke="#2a2aa0" stroke-width="1.2" fill="none" stroke-linejoin="miter"/>
<path d="M97.75,453.00 L97.75,466.50" stroke="#2a2aa0" stroke-width="1.2" fill="none" stroke-linejoin="miter"/>
<path d="M90.75,495.00 L104.75,495.00" stroke="#2a2aa0" stroke-width="1.2" fill="none" stroke-linejoin="miter"/>
<path d="M534.70,455.49 L534.70,480.70" stroke="#2a2aa0" stroke-width="1.4" fill="none" stroke-linejoin="miter"/>
<path d="M534.70,488.20 L534.70,513.77" stroke="#2a2aa0" stroke-width="1.4" fill="none" stroke-linejoin="miter"/>
<path d="M520.13,480.70 L549.26,480.70" stroke="#2a2aa0" stroke-width="1.4" fill="none" stroke-linejoin="miter"/>
<path d="M520.13,488.20 L549.26,488.20" stroke="#2a2aa0" stroke-width="1.4" fill="none" stroke-linejoin="miter"/>
<path d="M796.87,397.21 L821.50,397.21" stroke="#2a2aa0" stroke-width="1.4" fill="none" stroke-linejoin="miter"/>
<path d="M829.20,397.21 L855.13,397.21" stroke="#2a2aa0" stroke-width="1.4" fill="none" stroke-linejoin="miter"/>
<path d="M821.50,383.10 L821.50,411.50" stroke="#2a2aa0" stroke-width="1.4" fill="none" stroke-linejoin="miter"/>
<path d="M829.20,383.10 L829.20,411.50" stroke="#2a2aa0" stroke-width="1.4" fill="none" stroke-linejoin="miter"/>
<path d="M403.62,440.92 A14.6,14.6 0 0 1 418.22,455.50 A14.6,14.6 0 0 1 413.12,466.7 Q402.62,474 393.12,466.7 Q402.62,459.4 413.12,466.7 A14.6,14.6 0 0 1 413.12,488.1 Q402.62,495.4 393.12,488.1 Q402.62,480.8 413.12,488.1 A14.6,14.6 0 0 1 418.22,499.30 A14.6,14.6 0 0 1 403.62,513.77" stroke="#2a2aa0" stroke-width="1.4" fill="none"/>
<path d="M461.88,440.92 A14.6,14.6 0 0 0 447.27,455.50 A14.6,14.6 0 0 0 452.38,466.7 Q462.88,474 472.38,466.7 Q462.88,459.4 452.38,466.7 A14.6,14.6 0 0 0 452.38,488.1 Q462.88,495.4 472.38,488.1 Q462.88,480.8 452.38,488.1 A14.6,14.6 0 0 0 447.27,499.30 A14.6,14.6 0 0 0 461.88,513.77" stroke="#2a2aa0" stroke-width="1.4" fill="none"/>
<circle cx="395.9" cy="502.7" r="3.3" stroke="#2a2aa0" stroke-width="1.3" fill="none"/>
<circle cx="468.7" cy="502.5" r="3.3" stroke="#2a2aa0" stroke-width="1.3" fill="none"/>
<text x="177.3" y="378.8" font-family="Liberation Sans" font-size="20" fill="#000" font-weight="bold" text-anchor="start" textLength="29.0" lengthAdjust="spacingAndGlyphs" stroke="#000" stroke-width="0.55">R2</text>
<text x="179.0" y="432.3" font-family="Liberation Sans" font-size="20" fill="#000" font-weight="bold" text-anchor="start" textLength="26.8" lengthAdjust="spacingAndGlyphs" stroke="#000" stroke-width="0.55">50</text>
<text x="258.2" y="392.6" font-family="Liberation Sans" font-size="20" fill="#000" font-weight="bold" text-anchor="start" textLength="27.1" lengthAdjust="spacingAndGlyphs" stroke="#000" stroke-width="0.55">p1</text>
<text x="119.5" y="449" font-family="Liberation Sans" font-size="20" fill="#000" font-weight="bold" text-anchor="start" textLength="27.0" lengthAdjust="spacingAndGlyphs" stroke="#000" stroke-width="0.55">V1</text>
<text x="121.3" y="520.1" font-family="Liberation Sans" font-size="20" fill="#000" font-weight="bold" text-anchor="start" textLength="76.5" lengthAdjust="spacingAndGlyphs" stroke="#000" stroke-width="0.55">SINE(0</text>
<text x="202.8" y="520.1" font-family="Liberation Sans" font-size="20" fill="#000" font-weight="bold" text-anchor="start" textLength="27.2" lengthAdjust="spacingAndGlyphs" stroke="#000" stroke-width="0.55">43</text>
<text x="236.0" y="520.1" font-family="Liberation Sans" font-size="20" fill="#000" font-weight="bold" text-anchor="start" textLength="101.1" lengthAdjust="spacingAndGlyphs" stroke="#000" stroke-width="0.55">7.04meg)</text>
<text x="118.4" y="547.3" font-family="Liberation Sans" font-size="20" fill="#000" font-weight="bold" text-anchor="start" textLength="30.7" lengthAdjust="spacingAndGlyphs" stroke="#000" stroke-width="0.55">AC</text>
<text x="154.0" y="547.3" font-family="Liberation Sans" font-size="20" fill="#000" font-weight="bold" text-anchor="start" textLength="13.8" lengthAdjust="spacingAndGlyphs" stroke="#000" stroke-width="0.55">2</text>
<text x="381.7" y="383.8" font-family="Liberation Sans" font-size="20" fill="#000" font-weight="bold" text-anchor="start" textLength="27.4" lengthAdjust="spacingAndGlyphs" stroke="#000" stroke-width="0.55">K1</text>
<text x="415.3" y="383.8" font-family="Liberation Sans" font-size="20" fill="#000" font-weight="bold" text-anchor="start" textLength="24.9" lengthAdjust="spacingAndGlyphs" stroke="#000" stroke-width="0.55">L1</text>
<text x="445.8" y="383.8" font-family="Liberation Sans" font-size="20" fill="#000" font-weight="bold" text-anchor="start" textLength="26.1" lengthAdjust="spacingAndGlyphs" stroke="#000" stroke-width="0.55">L2</text>
<text x="477.5" y="383.8" font-family="Liberation Sans" font-size="20" fill="#000" font-weight="bold" text-anchor="start" textLength="12.8" lengthAdjust="spacingAndGlyphs" stroke="#000" stroke-width="0.55">1</text>
<text x="810.9" y="378.4" font-family="Liberation Sans" font-size="20" fill="#000" font-weight="bold" text-anchor="start" textLength="27.8" lengthAdjust="spacingAndGlyphs" stroke="#000" stroke-width="0.55">C1</text>
<text x="805.0" y="432.3" font-family="Liberation Sans" font-size="20" fill="#000" font-weight="bold" text-anchor="start" textLength="40.8" lengthAdjust="spacingAndGlyphs" stroke="#000" stroke-width="0.55">40p</text>
<text x="916.4" y="471.3" font-family="Liberation Sans" font-size="20" fill="#000" font-weight="bold" text-anchor="start" textLength="28.3" lengthAdjust="spacingAndGlyphs" stroke="#000" stroke-width="0.55">R1</text>
<text x="916.4" y="503.2" font-family="Liberation Sans" font-size="20" fill="#000" font-weight="bold" text-anchor="start" textLength="39.9" lengthAdjust="spacingAndGlyphs" stroke="#000" stroke-width="0.55">129</text>
<text x="542.0" y="471" font-family="Liberation Sans" font-size="20" fill="#000" font-weight="bold" text-anchor="start" textLength="27.0" lengthAdjust="spacingAndGlyphs" stroke="#000" stroke-width="0.55">C2</text>
<text x="541.4" y="514.3" font-family="Liberation Sans" font-size="20" fill="#000" font-weight="bold" text-anchor="start" textLength="53.9" lengthAdjust="spacingAndGlyphs" stroke="#000" stroke-width="0.55">217p</text>
<text x="360.4" y="463.4" font-family="Liberation Sans" font-size="20" fill="#000" font-weight="bold" text-anchor="start" textLength="26.0" lengthAdjust="spacingAndGlyphs" stroke="#000" stroke-width="0.55">L2</text>
<text x="351.0" y="491.9" font-family="Liberation Sans" font-size="20" fill="#000" font-weight="bold" text-anchor="start" textLength="41.0" lengthAdjust="spacingAndGlyphs" stroke="#000" stroke-width="0.55">40n</text>
<text x="474.3" y="459.9" font-family="Liberation Sans" font-size="20" fill="#000" font-weight="bold" text-anchor="start" textLength="24.9" lengthAdjust="spacingAndGlyphs" stroke="#000" stroke-width="0.55">L1</text>
<text x="472.6" y="509.3" font-family="Liberation Sans" font-size="20" fill="#000" font-weight="bold" text-anchor="start" textLength="26.6" lengthAdjust="spacingAndGlyphs" stroke="#000" stroke-width="0.55">2μ</text>
<text x="672.8" y="507.5" font-family="Liberation Sans" font-size="20" fill="#000" font-weight="bold" text-anchor="start" textLength="48.9" lengthAdjust="spacingAndGlyphs" stroke="#000" stroke-width="0.55">.tran</text>
<text x="727.5" y="507.5" font-family="Liberation Sans" font-size="20" fill="#000" font-weight="bold" text-anchor="start" textLength="15.6" lengthAdjust="spacingAndGlyphs" stroke="#000" stroke-width="0.55">0</text>
<text x="747.0" y="507.5" font-family="Liberation Sans" font-size="20" fill="#000" font-weight="bold" text-anchor="start" textLength="53.4" lengthAdjust="spacingAndGlyphs" stroke="#000" stroke-width="0.55">500u</text>
<text x="805.6" y="507.5" font-family="Liberation Sans" font-size="20" fill="#000" font-weight="bold" text-anchor="start" textLength="14.7" lengthAdjust="spacingAndGlyphs" stroke="#000" stroke-width="0.55">0</text>
<text x="826.1" y="507.5" font-family="Liberation Sans" font-size="20" fill="#000" font-weight="bold" text-anchor="start" textLength="25.9" lengthAdjust="spacingAndGlyphs" stroke="#000" stroke-width="0.55">1n</text>
<text x="606.6" y="536.5" font-family="Liberation Sans" font-size="20" fill="#000" font-weight="bold" text-anchor="start" textLength="31.8" lengthAdjust="spacingAndGlyphs" stroke="#000" stroke-width="0.55">;ac</text>
<text x="642.9" y="536.5" font-family="Liberation Sans" font-size="20" fill="#000" font-weight="bold" text-anchor="start" textLength="38.7" lengthAdjust="spacingAndGlyphs" stroke="#000" stroke-width="0.55">dec</text>
<text x="686.9" y="536.5" font-family="Liberation Sans" font-size="20" fill="#000" font-weight="bold" text-anchor="start" textLength="53.3" lengthAdjust="spacingAndGlyphs" stroke="#000" stroke-width="0.55">1000</text>
<text x="746.3" y="536.5" font-family="Liberation Sans" font-size="20" fill="#000" font-weight="bold" text-anchor="start" textLength="58.0" lengthAdjust="spacingAndGlyphs" stroke="#000" stroke-width="0.55">1meg</text>
<text x="811.4" y="536.5" font-family="Liberation Sans" font-size="20" fill="#000" font-weight="bold" text-anchor="start" textLength="84.5" lengthAdjust="spacingAndGlyphs" stroke="#000" stroke-width="0.55">100meg</text>
<rect x="81" y="66.4" width="52" height="12" fill="#ffffff" stroke="#c8c8c8" stroke-width="0.8"/>
<rect x="82" y="78.4" width="52" height="1" fill="#e4e4e4"/>
<text x="84" y="75.5" font-family="Liberation Sans" font-size="8.5" fill="#6a6a6a" font-weight="normal" text-anchor="start" textLength="45" lengthAdjust="spacingAndGlyphs" >Save (Ctrl+S)</text>
</svg></body></html>
